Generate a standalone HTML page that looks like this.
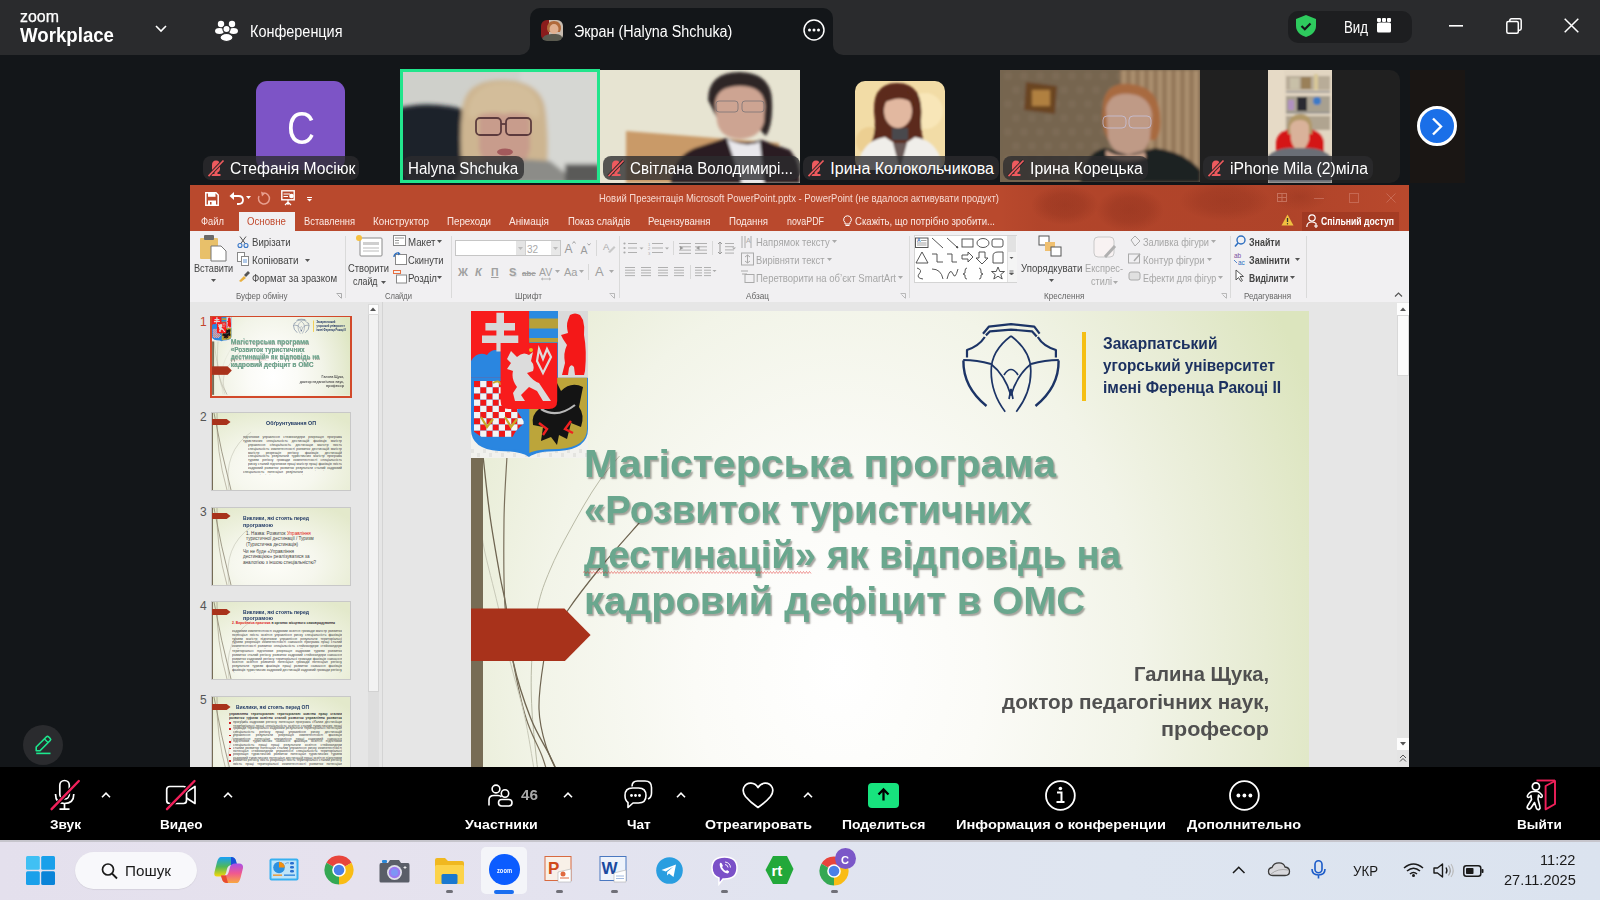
<!DOCTYPE html><html><head><meta charset="utf-8"><style>
html,body{margin:0;padding:0;width:1600px;height:900px;overflow:hidden;background:#131619;font-family:"Liberation Sans",sans-serif}
.t{position:absolute;white-space:nowrap;line-height:1;transform-origin:0 0}
svg{overflow:visible}
</style></head><body>
<div style="position:absolute;left:0px;top:0px;width:530px;height:55px;background:#2a2b2d;border-bottom-right-radius:10px"></div>
<div style="position:absolute;left:520px;top:0px;width:323px;height:20px;background:#2a2b2d"></div>
<div style="position:absolute;left:530px;top:8px;width:303px;height:50px;background:#131619;border-radius:10px 10px 0 0"></div>
<div style="position:absolute;left:833px;top:0px;width:767px;height:55px;background:#2a2b2d;border-bottom-left-radius:10px"></div>
<div id="t0" class="t" style="left:20.00px;top:8.00px;font-size:16.5px;font-weight:400;color:#ffffff;font-family:'Liberation Sans',sans-serif;transform:scaleX(0.9663);-webkit-text-stroke:0.25px #fff;">zoom</div>
<div id="t1" class="t" style="left:20.30px;top:25.00px;font-size:20px;font-weight:700;color:#ffffff;font-family:'Liberation Sans',sans-serif;transform:scaleX(0.9327);">Workplace</div>
<svg style="position:absolute;left:155px;top:25px;" width="12" height="8" viewBox="0 0 12 8"><polyline points="1,1 6,6 11,1" fill="none" stroke="#fff" stroke-width="1.6"/></svg>
<svg style="position:absolute;left:215px;top:20px;" width="23" height="22" viewBox="0 0 23 22"><circle cx="6" cy="4" r="3.2" fill="#fff"/><circle cx="17" cy="4" r="3.2" fill="#fff"/><ellipse cx="4.5" cy="11" rx="4.5" ry="3" fill="#fff"/><ellipse cx="18.5" cy="11" rx="4.5" ry="3" fill="#fff"/><circle cx="11.5" cy="9" r="3.6" fill="#fff" stroke="#2a2b2d" stroke-width="1.2"/><ellipse cx="11.5" cy="17.5" rx="6.5" ry="4" fill="#fff" stroke="#2a2b2d" stroke-width="1.2"/></svg>
<div id="t2" class="t" style="left:249.80px;top:24.00px;font-size:16px;font-weight:400;color:#ffffff;font-family:'Liberation Sans',sans-serif;transform:scaleX(0.9023);">Конференция</div>
<svg style="position:absolute;left:541px;top:20px;overflow:hidden" width="22" height="21" viewBox="0 0 22 21"><defs><clipPath id="av"><rect width="22" height="21" rx="6"/></clipPath><filter id="avb"><feGaussianBlur stdDeviation=".5"/></filter></defs><g clip-path="url(#av)" filter="url(#avb)"><rect width="22" height="21" fill="#c8bcb0"/><rect width="8" height="21" fill="#8a1a1a"/><path d="M6 9 Q6 1 13 1 Q20 1 20 9 L19 12 L7 12 Z" fill="#b06a3a"/><ellipse cx="13" cy="9" rx="4.5" ry="5" fill="#e0b090"/><path d="M0 21 Q2 13 13 14 Q22 13 22 21 Z" fill="#5a5a50"/></g></svg>
<div id="t3" class="t" style="left:574.40px;top:24.00px;font-size:16px;font-weight:400;color:#ffffff;font-family:'Liberation Sans',sans-serif;transform:scaleX(0.8956);">Экран (Halyna Shchuka)</div>
<svg style="position:absolute;left:803px;top:19px;" width="22" height="22" viewBox="0 0 22 22"><circle cx="11" cy="11" r="10" fill="none" stroke="#fff" stroke-width="1.5"/><circle cx="6.5" cy="11" r="1.5" fill="#fff"/><circle cx="11" cy="11" r="1.5" fill="#fff"/><circle cx="15.5" cy="11" r="1.5" fill="#fff"/></svg>
<div style="position:absolute;left:1288px;top:11px;width:124px;height:32px;background:#1d1e20;border-radius:10px"></div>
<svg style="position:absolute;left:1296px;top:15px;" width="20" height="22" viewBox="0 0 20 22"><path d="M10 0 L20 4 V11 C20 17 15 20.5 10 22 C5 20.5 0 17 0 11 V4 Z" fill="#2ecb5e"/><polyline points="5.5,11 8.8,14.2 14.5,8.5" fill="none" stroke="#131619" stroke-width="2.2"/></svg>
<div id="t4" class="t" style="left:1344.00px;top:19.00px;font-size:16.5px;font-weight:400;color:#ffffff;font-family:'Liberation Sans',sans-serif;transform:scaleX(0.8038);">Вид</div>
<svg style="position:absolute;left:1377px;top:18px;" width="14" height="15" viewBox="0 0 14 15"><rect x="0" y="4.5" width="14" height="10" rx="1.5" fill="#fff"/><rect x="0" y="0" width="4" height="4" rx="1" fill="#fff"/><rect x="5" y="0" width="4" height="4" rx="1" fill="#fff"/><rect x="10" y="0" width="4" height="4" rx="1" fill="#fff"/></svg>
<svg style="position:absolute;left:1449px;top:25px;" width="14" height="2" viewBox="0 0 14 2"><rect x="0" y="0" width="14" height="1.6" fill="#fff"/></svg>
<svg style="position:absolute;left:1506px;top:18px;" width="16" height="16" viewBox="0 0 16 16"><rect x="0.8" y="3.5" width="11.5" height="11.7" rx="1.5" fill="none" stroke="#fff" stroke-width="1.5"/><path d="M3.8 3.2 V2.5 Q3.8 0.8 5.5 0.8 H13.5 Q15.2 0.8 15.2 2.5 V10.5 Q15.2 12.2 13.5 12.2 H12.6" fill="none" stroke="#fff" stroke-width="1.5"/></svg>
<svg style="position:absolute;left:1564px;top:18px;" width="15" height="15" viewBox="0 0 15 15"><path d="M0.7 0.7 L14.3 14.3 M14.3 0.7 L0.7 14.3" stroke="#fff" stroke-width="1.5"/></svg>
<div style="position:absolute;left:256px;top:81px;width:89px;height:89px;background:#7d54c6;border-radius:11px"></div>
<div id="t5" class="t" style="left:286.50px;top:104.00px;font-size:47px;font-weight:400;color:#ffffff;font-family:'Liberation Sans',sans-serif;transform:scaleX(0.8247);">C</div>
<div style="position:absolute;left:203px;top:155.5px;width:156px;height:24.5px;background:rgba(44,44,46,0.78);border-radius:8px"></div>
<svg style="position:absolute;left:207px;top:158.5px;" width="18" height="18" viewBox="0 0 18 18"><path d="M9 1.5 Q13 1.5 13 6 V9.5 Q13 13.5 9 13.5 Q5 13.5 5 9.5 V6 Q5 1.5 9 1.5 Z" fill="#ee5a5e"/><path d="M7.5 13 H10.5 V15 H13.5 V17 H4.5 V15 H7.5 Z" fill="#ee5a5e"/><line x1="1.5" y1="17.2" x2="16.5" y2="1.5" stroke="#262626" stroke-width="3.4"/><line x1="1.5" y1="17.2" x2="16.5" y2="1.5" stroke="#ee5a5e" stroke-width="1.7"/></svg>
<div id="t6" class="t" style="left:230.00px;top:161.00px;font-size:16px;font-weight:400;color:#ffffff;font-family:'Liberation Sans',sans-serif;transform:scaleX(0.9787);">Стефанія Мосіюк</div>
<svg style="position:absolute;left:400px;top:69px;overflow:hidden" width="200" height="114" viewBox="0 0 200 114"><defs><filter id="b2" x="-20%" y="-20%" width="140%" height="140%"><feGaussianBlur stdDeviation="2.2"/></filter></defs><rect width="200" height="114" fill="#cfd0cb"/><g filter="url(#b2)"><rect x="120" y="0" width="80" height="114" fill="#d6d7d3"/><path d="M-5 40 Q30 30 70 42 L72 114 H-5 Z" fill="#1c232c"/><path d="M62 42 Q64 10 104 11 Q144 12 146 45 Q149 75 147 96 L62 96 Q59 70 62 42 Z" fill="#cdb591"/><path d="M79 48 Q80 38 104 39 Q128 38 130 52 L130 80 Q125 101 104 101 Q84 101 79 80 Z" fill="#c89c8c"/><path d="M68 42 Q72 14 104 14 Q136 14 140 42 L138 50 Q122 41 104 45 Q86 41 70 50 Z" fill="#d3bd9a"/><path d="M65 95 Q100 88 150 92 L178 114 H55 Z" fill="#8c8c88"/><rect x="165" y="95" width="35" height="19" fill="#5a5a58"/></g><g fill="none" stroke="#4a2a30" stroke-width="1.8" opacity=".85"><rect x="76" y="49" width="25" height="17" rx="4"/><rect x="106" y="49" width="25" height="17" rx="4"/><path d="M101 55 H106"/></g><ellipse cx="105" cy="83" rx="8" ry="3.5" fill="#9a4a50" opacity=".8"/></svg>
<div style="position:absolute;left:400px;top:69px;width:200px;height:114px;border:3px solid #22e58c;box-sizing:border-box"></div>
<div style="position:absolute;left:403px;top:155.5px;width:121px;height:24.5px;background:rgba(44,44,46,0.78);border-radius:8px"></div>
<div id="t7" class="t" style="left:408.40px;top:161.00px;font-size:16px;font-weight:400;color:#ffffff;font-family:'Liberation Sans',sans-serif;transform:scaleX(0.9458);">Halyna Shchuka</div>
<svg style="position:absolute;left:600px;top:70px;overflow:hidden" width="200" height="113" viewBox="0 0 200 113"><defs><filter id="b3" x="-20%" y="-20%" width="140%" height="140%"><feGaussianBlur stdDeviation="1.4"/></filter></defs><rect width="200" height="113" fill="#e7e4d2"/><g filter="url(#b3)"><path d="M26 61 L179 73 V113 H26 Z" fill="#c99a68"/><path d="M108 30 Q108 2 140 2 Q172 3 172 32 Q173 55 166 66 L160 60 L118 50 Z" fill="#2f2528"/><path d="M115 34 Q116 16 140 16 Q164 16 165 36 L164 52 Q160 68 140 69 Q120 68 117 52 Z" fill="#cda492"/><path d="M70 113 Q74 86 95 78 L126 68 Q142 76 162 70 L190 80 Q200 92 200 113 Z" fill="#2b1c23"/><path d="M127 69 L142 113 L164 113 L160 72 Q145 78 127 69 Z" fill="#e9e8ec"/></g><g fill="none" stroke="#6a6a70" stroke-width=".9" opacity=".75"><rect x="116" y="31" width="22" height="11" rx="3"/><rect x="142" y="31" width="22" height="11" rx="3"/></g></svg>
<div style="position:absolute;left:603px;top:155.5px;width:197px;height:24.5px;background:rgba(44,44,46,0.78);border-radius:8px"></div>
<svg style="position:absolute;left:607px;top:158.5px;" width="18" height="18" viewBox="0 0 18 18"><path d="M9 1.5 Q13 1.5 13 6 V9.5 Q13 13.5 9 13.5 Q5 13.5 5 9.5 V6 Q5 1.5 9 1.5 Z" fill="#ee5a5e"/><path d="M7.5 13 H10.5 V15 H13.5 V17 H4.5 V15 H7.5 Z" fill="#ee5a5e"/><line x1="1.5" y1="17.2" x2="16.5" y2="1.5" stroke="#262626" stroke-width="3.4"/><line x1="1.5" y1="17.2" x2="16.5" y2="1.5" stroke="#ee5a5e" stroke-width="1.7"/></svg>
<div id="t8" class="t" style="left:630.00px;top:161.00px;font-size:16px;font-weight:400;color:#ffffff;font-family:'Liberation Sans',sans-serif;transform:scaleX(0.9461);">Світлана Володимирі...</div>
<svg style="position:absolute;left:855px;top:81px;overflow:hidden" width="90" height="89" viewBox="0 0 90 89"><defs><filter id="b4" x="-20%" y="-20%" width="140%" height="140%"><feGaussianBlur stdDeviation="1.2"/></filter></defs><defs><clipPath id="c4"><rect width="90" height="89" rx="10"/></clipPath></defs><g clip-path="url(#c4)"><rect width="90" height="89" fill="#f2dca6"/><g filter="url(#b4)"><circle cx="70" cy="30" r="18" fill="#f8e6b8"/><circle cx="15" cy="60" r="14" fill="#eccf92"/><path d="M20 40 Q14 2 42 2 Q70 2 66 40 Q66 56 70 62 L16 62 Q20 54 20 40 Z" fill="#5c2a1a"/><ellipse cx="43" cy="30" rx="14" ry="17" fill="#e2b8a0"/><path d="M28 22 Q32 8 45 9 Q58 10 60 24 Q50 16 40 18 Q32 20 28 22 Z" fill="#5c2a1a"/><rect x="37" y="47" width="16" height="12" fill="#4a4a4e"/><path d="M2 89 Q5 60 30 56 L45 66 L60 56 Q85 60 88 89 Z" fill="#f0eeea"/><path d="M38 62 L45 89 L52 62 Z" fill="#6a5a58"/></g></g></svg>
<div style="position:absolute;left:803px;top:155.5px;width:196px;height:24.5px;background:rgba(44,44,46,0.78);border-radius:8px"></div>
<svg style="position:absolute;left:807px;top:158.5px;" width="18" height="18" viewBox="0 0 18 18"><path d="M9 1.5 Q13 1.5 13 6 V9.5 Q13 13.5 9 13.5 Q5 13.5 5 9.5 V6 Q5 1.5 9 1.5 Z" fill="#ee5a5e"/><path d="M7.5 13 H10.5 V15 H13.5 V17 H4.5 V15 H7.5 Z" fill="#ee5a5e"/><line x1="1.5" y1="17.2" x2="16.5" y2="1.5" stroke="#262626" stroke-width="3.4"/><line x1="1.5" y1="17.2" x2="16.5" y2="1.5" stroke="#ee5a5e" stroke-width="1.7"/></svg>
<div id="t9" class="t" style="left:830.30px;top:161.00px;font-size:16px;font-weight:400;color:#ffffff;font-family:'Liberation Sans',sans-serif;">Ірина Колокольчикова</div>
<svg style="position:absolute;left:1000px;top:70px;overflow:hidden" width="200" height="112" viewBox="0 0 200 112"><defs><filter id="b5" x="-20%" y="-20%" width="140%" height="140%"><feGaussianBlur stdDeviation="1.6"/></filter></defs><rect width="200" height="112" fill="#75644f"/><g filter="url(#b5)"><rect x="0" y="0" width="120" height="112" fill="#76654f"/><circle cx="8" cy="6" r="4" fill="#8a785e" opacity=".35"/><circle cx="16" cy="20" r="4" fill="#8a785e" opacity=".35"/><circle cx="8" cy="34" r="4" fill="#8a785e" opacity=".35"/><circle cx="16" cy="48" r="4" fill="#8a785e" opacity=".35"/><circle cx="8" cy="62" r="4" fill="#8a785e" opacity=".35"/><circle cx="16" cy="76" r="4" fill="#8a785e" opacity=".35"/><circle cx="8" cy="90" r="4" fill="#8a785e" opacity=".35"/><circle cx="16" cy="104" r="4" fill="#8a785e" opacity=".35"/><circle cx="24" cy="6" r="4" fill="#8a785e" opacity=".35"/><circle cx="32" cy="20" r="4" fill="#8a785e" opacity=".35"/><circle cx="24" cy="34" r="4" fill="#8a785e" opacity=".35"/><circle cx="32" cy="48" r="4" fill="#8a785e" opacity=".35"/><circle cx="24" cy="62" r="4" fill="#8a785e" opacity=".35"/><circle cx="32" cy="76" r="4" fill="#8a785e" opacity=".35"/><circle cx="24" cy="90" r="4" fill="#8a785e" opacity=".35"/><circle cx="32" cy="104" r="4" fill="#8a785e" opacity=".35"/><circle cx="40" cy="6" r="4" fill="#8a785e" opacity=".35"/><circle cx="48" cy="20" r="4" fill="#8a785e" opacity=".35"/><circle cx="40" cy="34" r="4" fill="#8a785e" opacity=".35"/><circle cx="48" cy="48" r="4" fill="#8a785e" opacity=".35"/><circle cx="40" cy="62" r="4" fill="#8a785e" opacity=".35"/><circle cx="48" cy="76" r="4" fill="#8a785e" opacity=".35"/><circle cx="40" cy="90" r="4" fill="#8a785e" opacity=".35"/><circle cx="48" cy="104" r="4" fill="#8a785e" opacity=".35"/><circle cx="56" cy="6" r="4" fill="#8a785e" opacity=".35"/><circle cx="64" cy="20" r="4" fill="#8a785e" opacity=".35"/><circle cx="56" cy="34" r="4" fill="#8a785e" opacity=".35"/><circle cx="64" cy="48" r="4" fill="#8a785e" opacity=".35"/><circle cx="56" cy="62" r="4" fill="#8a785e" opacity=".35"/><circle cx="64" cy="76" r="4" fill="#8a785e" opacity=".35"/><circle cx="56" cy="90" r="4" fill="#8a785e" opacity=".35"/><circle cx="64" cy="104" r="4" fill="#8a785e" opacity=".35"/><circle cx="72" cy="6" r="4" fill="#8a785e" opacity=".35"/><circle cx="80" cy="20" r="4" fill="#8a785e" opacity=".35"/><circle cx="72" cy="34" r="4" fill="#8a785e" opacity=".35"/><circle cx="80" cy="48" r="4" fill="#8a785e" opacity=".35"/><circle cx="72" cy="62" r="4" fill="#8a785e" opacity=".35"/><circle cx="80" cy="76" r="4" fill="#8a785e" opacity=".35"/><circle cx="72" cy="90" r="4" fill="#8a785e" opacity=".35"/><circle cx="80" cy="104" r="4" fill="#8a785e" opacity=".35"/><circle cx="88" cy="6" r="4" fill="#8a785e" opacity=".35"/><circle cx="96" cy="20" r="4" fill="#8a785e" opacity=".35"/><circle cx="88" cy="34" r="4" fill="#8a785e" opacity=".35"/><circle cx="96" cy="48" r="4" fill="#8a785e" opacity=".35"/><circle cx="88" cy="62" r="4" fill="#8a785e" opacity=".35"/><circle cx="96" cy="76" r="4" fill="#8a785e" opacity=".35"/><circle cx="88" cy="90" r="4" fill="#8a785e" opacity=".35"/><circle cx="96" cy="104" r="4" fill="#8a785e" opacity=".35"/><circle cx="104" cy="6" r="4" fill="#8a785e" opacity=".35"/><circle cx="112" cy="20" r="4" fill="#8a785e" opacity=".35"/><circle cx="104" cy="34" r="4" fill="#8a785e" opacity=".35"/><circle cx="112" cy="48" r="4" fill="#8a785e" opacity=".35"/><circle cx="104" cy="62" r="4" fill="#8a785e" opacity=".35"/><circle cx="112" cy="76" r="4" fill="#8a785e" opacity=".35"/><circle cx="104" cy="90" r="4" fill="#8a785e" opacity=".35"/><circle cx="112" cy="104" r="4" fill="#8a785e" opacity=".35"/><circle cx="120" cy="6" r="4" fill="#8a785e" opacity=".35"/><circle cx="128" cy="20" r="4" fill="#8a785e" opacity=".35"/><circle cx="120" cy="34" r="4" fill="#8a785e" opacity=".35"/><circle cx="128" cy="48" r="4" fill="#8a785e" opacity=".35"/><circle cx="120" cy="62" r="4" fill="#8a785e" opacity=".35"/><circle cx="128" cy="76" r="4" fill="#8a785e" opacity=".35"/><circle cx="120" cy="90" r="4" fill="#8a785e" opacity=".35"/><circle cx="128" cy="104" r="4" fill="#8a785e" opacity=".35"/><rect x="120" y="0" width="80" height="112" fill="#94785a"/><rect x="122" y="0" width="4" height="112" fill="#c0a484" opacity=".55"/><rect x="131" y="0" width="4" height="112" fill="#c0a484" opacity=".55"/><rect x="140" y="0" width="4" height="112" fill="#c0a484" opacity=".55"/><rect x="149" y="0" width="4" height="112" fill="#c0a484" opacity=".55"/><rect x="158" y="0" width="4" height="112" fill="#c0a484" opacity=".55"/><rect x="167" y="0" width="4" height="112" fill="#c0a484" opacity=".55"/><rect x="176" y="0" width="4" height="112" fill="#c0a484" opacity=".55"/><rect x="185" y="0" width="4" height="112" fill="#c0a484" opacity=".55"/><rect x="194" y="0" width="4" height="112" fill="#c0a484" opacity=".55"/><path d="M26 12 L57 16 L55 44 L24 40 Z" fill="#6a4424"/><rect x="32" y="20" width="18" height="16" fill="#b08040"/><path d="M103 35 Q105 12 130 14 Q158 16 160 45 Q162 60 156 70 L108 70 Q100 55 103 35 Z" fill="#a86a40"/><path d="M106 38 Q110 22 130 24 Q150 26 152 45 L150 68 Q146 84 130 86 Q112 84 108 68 Z" fill="#bf9a86"/><path d="M80 112 Q85 82 105 78 L128 85 L155 78 Q185 82 200 100 V112 Z" fill="#1d2120"/><path d="M106 80 Q120 90 145 82 L146 88 Q125 95 106 86 Z" fill="#c8a08a"/></g><g fill="none" stroke="#c8c8e8" stroke-width="1" opacity=".7"><rect x="103" y="46" width="23" height="12" rx="4"/><rect x="129" y="46" width="22" height="12" rx="4"/></g></svg>
<div style="position:absolute;left:1003px;top:155.5px;width:145px;height:24.5px;background:rgba(44,44,46,0.78);border-radius:8px"></div>
<svg style="position:absolute;left:1007px;top:158.5px;" width="18" height="18" viewBox="0 0 18 18"><path d="M9 1.5 Q13 1.5 13 6 V9.5 Q13 13.5 9 13.5 Q5 13.5 5 9.5 V6 Q5 1.5 9 1.5 Z" fill="#ee5a5e"/><path d="M7.5 13 H10.5 V15 H13.5 V17 H4.5 V15 H7.5 Z" fill="#ee5a5e"/><line x1="1.5" y1="17.2" x2="16.5" y2="1.5" stroke="#262626" stroke-width="3.4"/><line x1="1.5" y1="17.2" x2="16.5" y2="1.5" stroke="#ee5a5e" stroke-width="1.7"/></svg>
<div id="t10" class="t" style="left:1030.30px;top:161.00px;font-size:16px;font-weight:400;color:#ffffff;font-family:'Liberation Sans',sans-serif;transform:scaleX(0.9866);">Ірина Корецька</div>
<div style="position:absolute;left:1200px;top:70px;width:200px;height:113px;background:#202020;border-radius:0 10px 10px 0"></div>
<svg style="position:absolute;left:1268px;top:70px;overflow:hidden" width="64" height="113" viewBox="0 0 64 113"><defs><filter id="b6" x="-20%" y="-20%" width="140%" height="140%"><feGaussianBlur stdDeviation="0.9"/></filter></defs><rect width="64" height="113" fill="#e6dac6"/><g filter="url(#b6)"><rect x="16" y="0" width="48" height="113" fill="#e2d6c2"/><rect x="18" y="6" width="44" height="14" fill="#b8ac98"/><rect x="22" y="8" width="9" height="11" fill="#c8c0a8"/><rect x="33" y="7" width="10" height="12" fill="#9a8058"/><rect x="46" y="4" width="4" height="16" fill="#d8c898"/><rect x="18" y="21" width="44" height="1.5" fill="#888"/><rect x="18" y="26" width="44" height="16" fill="#a8a090"/><rect x="29" y="27" width="10" height="14" fill="#2a2a30"/><circle cx="49" cy="31" r="4" fill="#3a7ac8"/><rect x="20" y="30" width="6" height="10" fill="#b090c0"/><rect x="18" y="42" width="44" height="1.5" fill="#888"/><rect x="18" y="46" width="44" height="14" fill="#b0a490"/><rect x="30" y="47" width="8" height="9" fill="#a080c0"/><path d="M8 72 Q10 58 32 58 Q54 58 56 72 V90 H8 Z" fill="#d41818"/><path d="M20 55 Q22 44 32 44 Q43 44 44 56 L44 64 L20 64 Z" fill="#b09868"/><path d="M22 58 Q23 50 32 50 Q41 50 41 58 L41 70 Q38 80 32 80 Q25 80 23 70 Z" fill="#d9b29a"/><path d="M0 113 V86 Q10 77 24 78 L40 78 Q56 78 64 88 V113 Z" fill="#6a6e76"/></g></svg>
<div style="position:absolute;left:1203px;top:155.5px;width:170px;height:24.5px;background:rgba(44,44,46,0.78);border-radius:8px"></div>
<svg style="position:absolute;left:1207px;top:158.5px;" width="18" height="18" viewBox="0 0 18 18"><path d="M9 1.5 Q13 1.5 13 6 V9.5 Q13 13.5 9 13.5 Q5 13.5 5 9.5 V6 Q5 1.5 9 1.5 Z" fill="#ee5a5e"/><path d="M7.5 13 H10.5 V15 H13.5 V17 H4.5 V15 H7.5 Z" fill="#ee5a5e"/><line x1="1.5" y1="17.2" x2="16.5" y2="1.5" stroke="#262626" stroke-width="3.4"/><line x1="1.5" y1="17.2" x2="16.5" y2="1.5" stroke="#ee5a5e" stroke-width="1.7"/></svg>
<div id="t11" class="t" style="left:1230.00px;top:161.00px;font-size:16px;font-weight:400;color:#ffffff;font-family:'Liberation Sans',sans-serif;transform:scaleX(0.9830);">iPhone Mila (2)міла</div>
<div style="position:absolute;left:1410px;top:70px;width:55px;height:113px;background:#1a1614"></div>
<div style="position:absolute;left:1417px;top:106px;width:34px;height:34px;border:3px solid #fff;border-radius:50%;background:#1a6fe8"></div>
<svg style="position:absolute;left:1431px;top:117px;" width="12" height="19" viewBox="0 0 12 19"><polyline points="2,1.5 10,9.5 2,17.5" fill="none" stroke="#fff" stroke-width="2.4"/></svg>
<div style="position:absolute;left:190px;top:185px;width:1219px;height:46px;background:#b9492d"></div>
<div style="position:absolute;left:1000px;top:185px;width:409px;height:46px;background:radial-gradient(ellipse 34px 20px at 65px 20px,rgba(90,20,10,.2) 0,rgba(90,20,10,.15) 55%,transparent 100%),radial-gradient(ellipse 34px 22px at 130px 25px,rgba(90,20,10,.2) 0,rgba(90,20,10,.15) 55%,transparent 100%),radial-gradient(ellipse 46px 20px at 225px 16px,rgba(90,20,10,.17) 0,rgba(90,20,10,.12) 55%,transparent 100%),radial-gradient(ellipse 28px 14px at 300px 12px,rgba(90,20,10,.14) 0,transparent 100%),linear-gradient(90deg,transparent 0,rgba(90,20,10,.08) 10%,rgba(90,20,10,.1) 70%,transparent 100%)"></div>
<svg style="position:absolute;left:205px;top:192px;" width="14" height="14" viewBox="0 0 14 14"><path d="M0.8 0.8 H11 L13.2 3 V13.2 H0.8 Z" fill="none" stroke="#fff" stroke-width="1.5"/><rect x="3" y="0.8" width="7.5" height="4" fill="#fff"/><rect x="3" y="8.5" width="8" height="4.7" fill="#fff"/><rect x="5" y="10" width="1.5" height="2.5" fill="#b9492d"/></svg>
<svg style="position:absolute;left:229px;top:191px;" width="16" height="14" viewBox="0 0 16 14"><path d="M3 5 H9.5 Q14 5 14 9 Q14 13 9.5 13 H8" fill="none" stroke="#fff" stroke-width="1.8"/><path d="M0.5 5 L5 1 V9 Z" fill="#fff"/></svg>
<svg style="position:absolute;left:246px;top:196px;" width="5" height="3" viewBox="0 0 5 3"><path d="M0 0 H5 L2.5 3 Z" fill="#fff"/></svg>
<svg style="position:absolute;left:257px;top:191px;" width="13" height="14" viewBox="0 0 13 14"><path d="M6.5 2 A5.5 5.5 0 1 1 2 5" fill="none" stroke="#e8a090" stroke-width="1.5"/><path d="M4 0.5 L8 2.5 L5 5.5 Z" fill="#e8a090"/></svg>
<svg style="position:absolute;left:281px;top:190px;" width="14" height="16" viewBox="0 0 14 16"><rect x="0.8" y="0.8" width="12.4" height="9" fill="none" stroke="#fff" stroke-width="1.4"/><path d="M2.5 4 H9 M2.5 6.5 H7" stroke="#fff" stroke-width="1.2"/><path d="M7 10 V15 M4 15 L7 12 L10 15" stroke="#fff" stroke-width="1.2" fill="none"/><circle cx="10.5" cy="6" r="2.3" fill="#fff"/></svg>
<svg style="position:absolute;left:307px;top:197px;" width="5" height="5" viewBox="0 0 5 5"><rect x="0" y="0" width="5" height="1" fill="#fff"/><path d="M0 2 H5 L2.5 4.5 Z" fill="#fff"/></svg>
<div id="t12" class="t" style="left:599.00px;top:193.00px;font-size:10.5px;font-weight:400;color:#f6d8d0;font-family:'Liberation Sans',sans-serif;transform:scaleX(0.9013);">Новий Презентація Microsoft PowerPoint.pptx - PowerPoint (не вдалося активувати продукт)</div>
<svg style="position:absolute;left:1277px;top:193px;opacity:.5" width="10" height="9" viewBox="0 0 10 9"><rect x="0.5" y="0.5" width="9" height="8" fill="none" stroke="#e0a090" stroke-width="1"/><path d="M0.5 4.5 H9.5 M5 0.5 V8.5" stroke="#e0a090" stroke-width="1"/></svg>
<svg style="position:absolute;left:1314px;top:198px;opacity:.6" width="10" height="1" viewBox="0 0 10 1"><rect width="10" height="1" fill="#d08070"/></svg>
<svg style="position:absolute;left:1349px;top:193px;opacity:.5" width="10" height="10" viewBox="0 0 10 10"><rect x="0.5" y="0.5" width="9" height="9" fill="none" stroke="#d88a7a" stroke-width="1"/></svg>
<svg style="position:absolute;left:1386px;top:193px;opacity:.5" width="10" height="10" viewBox="0 0 10 10"><path d="M0.5 0.5 L9.5 9.5 M9.5 0.5 L0.5 9.5" stroke="#d88a7a" stroke-width="1"/></svg>
<div style="position:absolute;left:239px;top:212px;width:56px;height:19px;background:#f1f0f2"></div>
<div id="t13" class="t" style="left:201.00px;top:216.00px;font-size:10.5px;font-weight:400;color:#fbe9e4;font-family:'Liberation Sans',sans-serif;transform:scaleX(0.8905);">Файл</div>
<div id="t14" class="t" style="left:246.70px;top:216.00px;font-size:10.5px;font-weight:400;color:#c24a2e;font-family:'Liberation Sans',sans-serif;transform:scaleX(0.9200);">Основне</div>
<div id="t15" class="t" style="left:304.00px;top:216.00px;font-size:10.5px;font-weight:400;color:#fbe9e4;font-family:'Liberation Sans',sans-serif;transform:scaleX(0.8889);">Вставлення</div>
<div id="t16" class="t" style="left:373.00px;top:216.00px;font-size:10.5px;font-weight:400;color:#fbe9e4;font-family:'Liberation Sans',sans-serif;transform:scaleX(0.9353);">Конструктор</div>
<div id="t17" class="t" style="left:446.60px;top:216.00px;font-size:10.5px;font-weight:400;color:#fbe9e4;font-family:'Liberation Sans',sans-serif;transform:scaleX(0.9248);">Переходи</div>
<div id="t18" class="t" style="left:509.00px;top:216.00px;font-size:10.5px;font-weight:400;color:#fbe9e4;font-family:'Liberation Sans',sans-serif;transform:scaleX(0.9471);">Анімація</div>
<div id="t19" class="t" style="left:567.70px;top:216.00px;font-size:10.5px;font-weight:400;color:#fbe9e4;font-family:'Liberation Sans',sans-serif;transform:scaleX(0.9056);">Показ слайдів</div>
<div id="t20" class="t" style="left:648.00px;top:216.00px;font-size:10.5px;font-weight:400;color:#fbe9e4;font-family:'Liberation Sans',sans-serif;transform:scaleX(0.9130);">Рецензування</div>
<div id="t21" class="t" style="left:729.00px;top:216.00px;font-size:10.5px;font-weight:400;color:#fbe9e4;font-family:'Liberation Sans',sans-serif;transform:scaleX(0.9197);">Подання</div>
<div id="t22" class="t" style="left:787.00px;top:216.00px;font-size:10.5px;font-weight:400;color:#fbe9e4;font-family:'Liberation Sans',sans-serif;transform:scaleX(0.8451);">novaPDF</div>
<svg style="position:absolute;left:843px;top:215px;" width="9" height="12" viewBox="0 0 9 12"><path d="M4.5 0.8 A3.8 3.8 0 0 1 7 7.5 V9 H2 V7.5 A3.8 3.8 0 0 1 4.5 0.8 Z" fill="none" stroke="#fff" stroke-width="1"/><path d="M2.5 10.5 H6.5" stroke="#fff" stroke-width="1"/></svg>
<div id="t23" class="t" style="left:855.00px;top:216.00px;font-size:10.5px;font-weight:400;color:#fbe9e4;font-family:'Liberation Sans',sans-serif;transform:scaleX(0.9112);">Скажіть, що потрібно зробити...</div>
<svg style="position:absolute;left:1281px;top:214px;" width="13" height="12" viewBox="0 0 13 12"><path d="M6.5 0.5 L12.5 11.5 H0.5 Z" fill="#f0c040"/><path d="M6.5 4 V8" stroke="#333" stroke-width="1.3"/><circle cx="6.5" cy="9.8" r=".7" fill="#333"/></svg>
<div style="position:absolute;left:1302px;top:212px;width:97px;height:19px;background:rgba(120,30,15,.28)"></div>
<svg style="position:absolute;left:1306px;top:214px;" width="13" height="14" viewBox="0 0 13 14"><circle cx="6" cy="4" r="3.2" fill="none" stroke="#fff" stroke-width="1.2"/><path d="M0.8 13 Q0.8 8 6 8 Q9 8 10.5 10" fill="none" stroke="#fff" stroke-width="1.2"/><path d="M10 10 V14 M8 12 H12" stroke="#fff" stroke-width="1.2"/></svg>
<div id="t24" class="t" style="left:1320.70px;top:216.00px;font-size:10.5px;font-weight:700;color:#fff;font-family:'Liberation Sans',sans-serif;transform:scaleX(0.8247);">Спільний доступ</div>
<div style="position:absolute;left:190px;top:231px;width:1219px;height:70.5px;background:#f1f0f2"></div>
<div style="position:absolute;left:190px;top:301.5px;width:1219px;height:466px;background:#e6e6e6"></div>
<div style="position:absolute;left:344.6px;top:236px;width:1px;height:62px;background:#dadada"></div>
<div style="position:absolute;left:451.4px;top:236px;width:1px;height:62px;background:#dadada"></div>
<div style="position:absolute;left:618.7px;top:236px;width:1px;height:62px;background:#dadada"></div>
<div style="position:absolute;left:909px;top:236px;width:1px;height:62px;background:#dadada"></div>
<div style="position:absolute;left:1229.7px;top:236px;width:1px;height:62px;background:#dadada"></div>
<div style="position:absolute;left:1306px;top:236px;width:1px;height:62px;background:#dadada"></div>
<svg style="position:absolute;left:198px;top:234px;" width="30" height="28" viewBox="0 0 30 28"><rect x="2" y="4" width="18" height="21" rx="1" fill="#e8c06a"/><rect x="6" y="1" width="10" height="5" rx="1" fill="#6a6a6a"/><path d="M13 12 H23 L28 17 V27 H13 Z" fill="#fff" stroke="#777" stroke-width="1"/></svg>
<div id="t25" class="t" style="left:193.80px;top:263.00px;font-size:10.5px;font-weight:400;color:#444444;font-family:'Liberation Sans',sans-serif;transform:scaleX(0.8729);">Вставити</div>
<svg style="position:absolute;left:211px;top:279px;" width="5" height="3" viewBox="0 0 5 3"><path d="M0 0 H5 L2.5 3 Z" fill="#555"/></svg>
<svg style="position:absolute;left:237px;top:236px;" width="12" height="12" viewBox="0 0 12 12"><path d="M3 0.5 L8.5 8 M9 0.5 L3.5 8" stroke="#555" stroke-width="1"/><circle cx="3" cy="9.5" r="2" fill="none" stroke="#3a78c8" stroke-width="1.1"/><circle cx="9" cy="9.5" r="2" fill="none" stroke="#3a78c8" stroke-width="1.1"/></svg>
<div id="t26" class="t" style="left:251.50px;top:237.00px;font-size:10.5px;font-weight:400;color:#444444;font-family:'Liberation Sans',sans-serif;transform:scaleX(0.9136);">Вирізати</div>
<svg style="position:absolute;left:237px;top:252px;" width="12" height="14" viewBox="0 0 12 14"><rect x="0.5" y="0.5" width="7" height="9" fill="#fff" stroke="#888" stroke-width="1"/><rect x="4.5" y="4.5" width="7" height="9" fill="#fff" stroke="#888" stroke-width="1"/><path d="M6 8 H10 M6 10 H10" stroke="#3a78c8" stroke-width=".8"/></svg>
<div id="t27" class="t" style="left:251.50px;top:255.00px;font-size:10.5px;font-weight:400;color:#444444;font-family:'Liberation Sans',sans-serif;transform:scaleX(0.9376);">Копіювати</div>
<svg style="position:absolute;left:305px;top:259px;" width="5" height="3" viewBox="0 0 5 3"><path d="M0 0 H5 L2.5 3 Z" fill="#555"/></svg>
<svg style="position:absolute;left:238px;top:270px;" width="12" height="12" viewBox="0 0 12 12"><path d="M1 11 L6 6 L8 8 L3 12 Z" fill="#e8b040"/><path d="M6 5 L10 1 L12 3 L8 7 Z" fill="#555"/></svg>
<div id="t28" class="t" style="left:251.50px;top:273.00px;font-size:10.5px;font-weight:400;color:#444444;font-family:'Liberation Sans',sans-serif;transform:scaleX(0.9164);">Формат за зразком</div>
<div id="t29" class="t" style="left:235.60px;top:291.00px;font-size:9.5px;font-weight:400;color:#666666;font-family:'Liberation Sans',sans-serif;transform:scaleX(0.8446);">Буфер обміну</div>
<svg style="position:absolute;left:336px;top:293px;" width="6" height="6" viewBox="0 0 6 6"><path d="M0.5 0.5 H5.5 V5.5" fill="none" stroke="#999" stroke-width=".8"/><path d="M1.5 1.5 L5 5" stroke="#999" stroke-width=".8"/></svg>
<svg style="position:absolute;left:354px;top:234px;" width="30" height="24" viewBox="0 0 30 24"><rect x="6" y="4" width="22" height="18" rx="1" fill="#fff" stroke="#8a8a8a" stroke-width="1"/><rect x="9" y="8" width="16" height="3" fill="#cfcfcf"/><path d="M9 14 H25 M9 17 H25" stroke="#bbb" stroke-width="1"/><circle cx="5" cy="4" r="3" fill="#f5c040"/></svg>
<div id="t30" class="t" style="left:348.00px;top:263.00px;font-size:10.5px;font-weight:400;color:#444444;font-family:'Liberation Sans',sans-serif;transform:scaleX(0.8898);">Створити</div>
<div id="t31" class="t" style="left:353.00px;top:276.00px;font-size:10.5px;font-weight:400;color:#444444;font-family:'Liberation Sans',sans-serif;transform:scaleX(0.8385);">слайд</div>
<svg style="position:absolute;left:381px;top:281px;" width="5" height="3" viewBox="0 0 5 3"><path d="M0 0 H5 L2.5 3 Z" fill="#555"/></svg>
<svg style="position:absolute;left:393px;top:235px;" width="13" height="11" viewBox="0 0 13 11"><rect x="0.5" y="0.5" width="12" height="10" fill="#fff" stroke="#888" stroke-width="1"/><path d="M2 3 H11 M2 5.5 H6 M2 8 H6" stroke="#999" stroke-width="1"/></svg>
<div id="t32" class="t" style="left:408.00px;top:237.00px;font-size:10.5px;font-weight:400;color:#444444;font-family:'Liberation Sans',sans-serif;transform:scaleX(0.9253);">Макет</div>
<svg style="position:absolute;left:437px;top:240px;" width="5" height="3" viewBox="0 0 5 3"><path d="M0 0 H5 L2.5 3 Z" fill="#555"/></svg>
<svg style="position:absolute;left:393px;top:252px;" width="14" height="13" viewBox="0 0 14 13"><rect x="2.5" y="2.5" width="11" height="10" fill="#fff" stroke="#888" stroke-width="1"/><path d="M1 5 A4 4 0 0 1 6 1" fill="none" stroke="#2f6fc0" stroke-width="1.4"/><path d="M5 0 L7.5 1.5 L5 3.5Z" fill="#2f6fc0"/></svg>
<div id="t33" class="t" style="left:408.00px;top:255.00px;font-size:10.5px;font-weight:400;color:#444444;font-family:'Liberation Sans',sans-serif;transform:scaleX(0.8902);">Скинути</div>
<svg style="position:absolute;left:393px;top:270px;" width="14" height="13" viewBox="0 0 14 13"><rect x="0.5" y="0.5" width="7" height="3" fill="none" stroke="#e87040" stroke-width="1"/><rect x="3.5" y="5" width="10" height="8" fill="#fff" stroke="#888" stroke-width="1"/></svg>
<div id="t34" class="t" style="left:408.00px;top:273.00px;font-size:10.5px;font-weight:400;color:#444444;font-family:'Liberation Sans',sans-serif;transform:scaleX(0.9225);">Розділ</div>
<svg style="position:absolute;left:437px;top:276px;" width="5" height="3" viewBox="0 0 5 3"><path d="M0 0 H5 L2.5 3 Z" fill="#555"/></svg>
<div id="t35" class="t" style="left:384.50px;top:291.00px;font-size:9.5px;font-weight:400;color:#666666;font-family:'Liberation Sans',sans-serif;transform:scaleX(0.7978);">Слайди</div>
<div style="position:absolute;left:454.6px;top:240.4px;width:106px;height:16px;background:#fff;border:1px solid #c6c6c6;box-sizing:border-box"></div>
<div style="position:absolute;left:516px;top:241.4px;width:8.6px;height:14px;background:#e4e4e4"></div>
<div style="position:absolute;left:524.6px;top:241.4px;width:1px;height:14px;background:#d0d0d0"></div>
<div style="position:absolute;left:551px;top:241.4px;width:8.6px;height:14px;background:#e8e8e8"></div>
<svg style="position:absolute;left:518px;top:247px;" width="5" height="3" viewBox="0 0 5 3"><path d="M0 0 H5 L2.5 3 Z" fill="#bbb"/></svg>
<svg style="position:absolute;left:553px;top:247px;" width="5" height="3" viewBox="0 0 5 3"><path d="M0 0 H5 L2.5 3 Z" fill="#bbb"/></svg>
<div id="t36" class="t" style="left:527.00px;top:245.00px;font-size:10px;font-weight:400;color:#aaa;font-family:'Liberation Sans',sans-serif;">32</div>
<svg style="position:absolute;left:564px;top:240px;" width="12" height="14" viewBox="0 0 12 14"><text x="0.5" y="13" font-size="12" fill="#9a9a9a" font-family="Liberation Sans">A</text><path d="M8.5 3.5 L10 1.5 L11.5 3.5" fill="none" stroke="#9a9a9a" stroke-width=".9"/></svg>
<svg style="position:absolute;left:580px;top:242px;" width="11" height="12" viewBox="0 0 11 12"><text x="0.5" y="11.5" font-size="10.5" fill="#9a9a9a" font-family="Liberation Sans">A</text><path d="M7.5 1.5 L9 3.2 L10.5 1.5" fill="none" stroke="#9a9a9a" stroke-width=".9"/></svg>
<div style="position:absolute;left:596px;top:240px;width:1px;height:16px;background:#d8d8d8"></div>
<svg style="position:absolute;left:603px;top:240px;" width="12" height="14" viewBox="0 0 12 14"><text x="0" y="10" font-size="9.5" fill="#aaa" font-family="Liberation Sans">A</text><path d="M5 12 L11 6 L12.5 7.5 L7 13 Z" fill="#c8c8c8"/></svg>
<div id="t37" class="t" style="left:458.00px;top:267.00px;font-size:11px;font-weight:400;color:#a0a0a0;font-family:'Liberation Sans',sans-serif;font-weight:700">Ж</div>
<div id="t38" class="t" style="left:475.00px;top:267.00px;font-size:11px;font-weight:400;color:#a0a0a0;font-family:'Liberation Sans',sans-serif;font-weight:700;font-style:italic">К</div>
<div id="t39" class="t" style="left:491.00px;top:267.00px;font-size:10.5px;font-weight:400;color:#a0a0a0;font-family:'Liberation Sans',sans-serif;font-weight:700;text-decoration:underline">П</div>
<div id="t40" class="t" style="left:509.00px;top:267.00px;font-size:11px;font-weight:400;color:#a0a0a0;font-family:'Liberation Sans',sans-serif;font-weight:700;text-shadow:1px 1px 0 #ddd">S</div>
<div id="t41" class="t" style="left:522.00px;top:270.00px;font-size:8px;font-weight:400;color:#a0a0a0;font-family:'Liberation Sans',sans-serif;font-weight:700;text-decoration:line-through;font-size:8px">abe</div>
<div id="t42" class="t" style="left:539.00px;top:267.00px;font-size:10.5px;font-weight:400;color:#a0a0a0;font-family:'Liberation Sans',sans-serif;">AV</div>
<div id="t43" class="t" style="left:564.00px;top:267.00px;font-size:11px;font-weight:400;color:#a0a0a0;font-family:'Liberation Sans',sans-serif;">Aa</div>
<div id="t44" class="t" style="left:595.00px;top:265.00px;font-size:13px;font-weight:400;color:#a0a0a0;font-family:'Liberation Sans',sans-serif;">A</div>
<svg style="position:absolute;left:541px;top:277px;" width="10" height="4" viewBox="0 0 10 4"><path d="M0.5 2 H9.5 M0.5 2 L2 0.8 M0.5 2 L2 3.2 M9.5 2 L8 0.8 M9.5 2 L8 3.2" fill="none" stroke="#aaa" stroke-width=".8"/></svg>
<svg style="position:absolute;left:555px;top:270px;" width="5" height="3" viewBox="0 0 5 3"><path d="M0 0 H5 L2.5 3 Z" fill="#aaa"/></svg>
<svg style="position:absolute;left:579px;top:270px;" width="5" height="3" viewBox="0 0 5 3"><path d="M0 0 H5 L2.5 3 Z" fill="#aaa"/></svg>
<svg style="position:absolute;left:609px;top:270px;" width="5" height="3" viewBox="0 0 5 3"><path d="M0 0 H5 L2.5 3 Z" fill="#aaa"/></svg>
<div style="position:absolute;left:588px;top:264px;width:1px;height:16px;background:#d8d8d8"></div>
<div id="t45" class="t" style="left:515.00px;top:291.00px;font-size:9.5px;font-weight:400;color:#666666;font-family:'Liberation Sans',sans-serif;transform:scaleX(0.8636);">Шрифт</div>
<svg style="position:absolute;left:609px;top:293px;" width="6" height="6" viewBox="0 0 6 6"><path d="M0.5 0.5 H5.5 V5.5" fill="none" stroke="#aaa" stroke-width=".8"/><path d="M1.5 1.5 L5 5" stroke="#aaa" stroke-width=".8"/></svg>
<svg style="position:absolute;left:623px;top:242px;" width="22" height="12" viewBox="0 0 22 12"><circle cx="1.5" cy="1.5" r="1.1" fill="#aaa"/><circle cx="1.5" cy="6" r="1.1" fill="#aaa"/><circle cx="1.5" cy="10.5" r="1.1" fill="#aaa"/><rect x="5" y="1.0" width="9" height="1" fill="#b0b0b0"/><rect x="5" y="5.5" width="9" height="1" fill="#b0b0b0"/><rect x="5" y="10.0" width="9" height="1" fill="#b0b0b0"/><path d="M16.5 5.5 H20.5 L18.5 7.5Z" fill="#aaa"/></svg>
<svg style="position:absolute;left:648px;top:242px;" width="24" height="12" viewBox="0 0 24 12"><text x="0" y="3.5" font-size="4" fill="#aaa" font-family="Liberation Sans">1</text><text x="0" y="8" font-size="4" fill="#aaa" font-family="Liberation Sans">2</text><text x="0" y="12.5" font-size="4" fill="#aaa" font-family="Liberation Sans">3</text><rect x="4" y="1.0" width="11" height="1" fill="#b0b0b0"/><rect x="4" y="5.5" width="11" height="1" fill="#b0b0b0"/><rect x="4" y="10.0" width="11" height="1" fill="#b0b0b0"/><path d="M17 5.5 H21 L19 7.5Z" fill="#aaa"/></svg>
<div style="position:absolute;left:673px;top:241px;width:1px;height:14px;background:#d8d8d8"></div>
<svg style="position:absolute;left:679px;top:242px;" width="12" height="12" viewBox="0 0 12 12"><rect x="0" y="1.0" width="12" height="1" fill="#b0b0b0"/><rect x="0" y="4.3" width="12" height="1" fill="#b0b0b0"/><rect x="0" y="7.6" width="12" height="1" fill="#b0b0b0"/><rect x="0" y="10.899999999999999" width="12" height="1" fill="#b0b0b0"/><path d="M1 4 L4.5 6 L1 8Z" fill="#999"/></svg>
<svg style="position:absolute;left:695px;top:242px;" width="12" height="12" viewBox="0 0 12 12"><rect x="0" y="1.0" width="12" height="1" fill="#b0b0b0"/><rect x="0" y="4.3" width="12" height="1" fill="#b0b0b0"/><rect x="0" y="7.6" width="12" height="1" fill="#b0b0b0"/><rect x="0" y="10.899999999999999" width="12" height="1" fill="#b0b0b0"/><path d="M4.5 4 L1 6 L4.5 8Z" fill="#999"/></svg>
<div style="position:absolute;left:712px;top:241px;width:1px;height:14px;background:#d8d8d8"></div>
<svg style="position:absolute;left:717px;top:241px;" width="20" height="14" viewBox="0 0 20 14"><path d="M3 1 V13 M1 3 L3 1 L5 3 M1 11 L3 13 L5 11" stroke="#999" fill="none" stroke-width="1"/><rect x="8" y="2.0" width="9" height="1" fill="#b0b0b0"/><rect x="8" y="5.2" width="9" height="1" fill="#b0b0b0"/><rect x="8" y="8.4" width="9" height="1" fill="#b0b0b0"/><rect x="8" y="11.600000000000001" width="9" height="1" fill="#b0b0b0"/><path d="M15 6.5 H19 L17 8.5Z" fill="#aaa"/></svg>
<svg style="position:absolute;left:625px;top:266px;" width="10" height="10" viewBox="0 0 10 10"><rect x="0" y="1.0" width="10" height="1" fill="#b0b0b0"/><rect x="0" y="3.7" width="10" height="1" fill="#b0b0b0"/><rect x="0" y="6.4" width="10" height="1" fill="#b0b0b0"/><rect x="0" y="9.100000000000001" width="10" height="1" fill="#b0b0b0"/></svg>
<svg style="position:absolute;left:641px;top:266px;" width="10" height="10" viewBox="0 0 10 10"><rect x="0" y="1.0" width="10" height="1" fill="#b0b0b0"/><rect x="0" y="3.7" width="10" height="1" fill="#b0b0b0"/><rect x="0" y="6.4" width="10" height="1" fill="#b0b0b0"/><rect x="0" y="9.100000000000001" width="10" height="1" fill="#b0b0b0"/></svg>
<svg style="position:absolute;left:658px;top:266px;" width="10" height="10" viewBox="0 0 10 10"><rect x="0" y="1.0" width="10" height="1" fill="#b0b0b0"/><rect x="0" y="3.7" width="10" height="1" fill="#b0b0b0"/><rect x="0" y="6.4" width="10" height="1" fill="#b0b0b0"/><rect x="0" y="9.100000000000001" width="10" height="1" fill="#b0b0b0"/></svg>
<svg style="position:absolute;left:674px;top:266px;" width="10" height="10" viewBox="0 0 10 10"><rect x="0" y="1.0" width="10" height="1" fill="#b0b0b0"/><rect x="0" y="3.7" width="10" height="1" fill="#b0b0b0"/><rect x="0" y="6.4" width="10" height="1" fill="#b0b0b0"/><rect x="0" y="9.100000000000001" width="10" height="1" fill="#b0b0b0"/></svg>
<div style="position:absolute;left:690px;top:265px;width:1px;height:14px;background:#d8d8d8"></div>
<svg style="position:absolute;left:695px;top:266px;" width="20" height="10" viewBox="0 0 20 10"><rect x="0" y="1.0" width="7" height="1" fill="#b0b0b0"/><rect x="0" y="3.7" width="7" height="1" fill="#b0b0b0"/><rect x="0" y="6.4" width="7" height="1" fill="#b0b0b0"/><rect x="0" y="9.100000000000001" width="7" height="1" fill="#b0b0b0"/><rect x="9" y="1.0" width="7" height="1" fill="#b0b0b0"/><rect x="9" y="3.7" width="7" height="1" fill="#b0b0b0"/><rect x="9" y="6.4" width="7" height="1" fill="#b0b0b0"/><rect x="9" y="9.100000000000001" width="7" height="1" fill="#b0b0b0"/><path d="M17.5 4 H21.5 L19.5 6Z" fill="#aaa"/></svg>
<svg style="position:absolute;left:741px;top:235px;" width="12" height="14" viewBox="0 0 12 14"><path d="M1 1 V13 M4 1 V13 M10 1 V13" stroke="#aaa" stroke-width="1"/><text x="5" y="8" font-size="7" fill="#aaa">A</text></svg>
<div id="t46" class="t" style="left:756.00px;top:237.00px;font-size:10.5px;font-weight:400;color:#a6a6a6;font-family:'Liberation Sans',sans-serif;transform:scaleX(0.9014);">Напрямок тексту</div>
<svg style="position:absolute;left:832px;top:240px;" width="5" height="3" viewBox="0 0 5 3"><path d="M0 0 H5 L2.5 3 Z" fill="#aaa"/></svg>
<svg style="position:absolute;left:741px;top:252px;" width="13" height="14" viewBox="0 0 13 14"><rect x="0.5" y="1" width="12" height="12" fill="none" stroke="#aaa" stroke-width="1"/><path d="M6.5 3 V11 M4 5 L6.5 3 L9 5 M4 9 L6.5 11 L9 9" stroke="#aaa" fill="none" stroke-width="1"/></svg>
<div id="t47" class="t" style="left:756.00px;top:255.00px;font-size:10.5px;font-weight:400;color:#a6a6a6;font-family:'Liberation Sans',sans-serif;transform:scaleX(0.8896);">Вирівняти текст</div>
<svg style="position:absolute;left:827px;top:258px;" width="5" height="3" viewBox="0 0 5 3"><path d="M0 0 H5 L2.5 3 Z" fill="#aaa"/></svg>
<svg style="position:absolute;left:740px;top:270px;" width="15" height="13" viewBox="0 0 15 13"><path d="M1 1 H8 M2 4 H7" stroke="#aaa" stroke-width="1"/><rect x="5" y="4.5" width="9" height="8" fill="none" stroke="#aaa" stroke-width="1"/></svg>
<div id="t48" class="t" style="left:756.00px;top:273.00px;font-size:10.5px;font-weight:400;color:#a6a6a6;font-family:'Liberation Sans',sans-serif;transform:scaleX(0.9085);">Перетворити на об’єкт SmartArt</div>
<svg style="position:absolute;left:898px;top:276px;" width="5" height="3" viewBox="0 0 5 3"><path d="M0 0 H5 L2.5 3 Z" fill="#aaa"/></svg>
<div id="t49" class="t" style="left:746.00px;top:291.00px;font-size:9.5px;font-weight:400;color:#666666;font-family:'Liberation Sans',sans-serif;transform:scaleX(0.8628);">Абзац</div>
<svg style="position:absolute;left:900px;top:293px;" width="6" height="6" viewBox="0 0 6 6"><path d="M0.5 0.5 H5.5 V5.5" fill="none" stroke="#aaa" stroke-width=".8"/><path d="M1.5 1.5 L5 5" stroke="#aaa" stroke-width=".8"/></svg>
<div style="position:absolute;left:913.5px;top:235px;width:103.3px;height:48px;background:#fff;border:1px solid #d4d4d4;box-sizing:border-box"></div>
<div style="position:absolute;left:1006.5px;top:236px;width:10px;height:46px;background:#f4f4f4;border-left:1px solid #e0e0e0;box-sizing:border-box"></div>
<div style="position:absolute;left:1007px;top:236px;width:9px;height:16px;background:#e2e2e2"></div>
<svg style="position:absolute;left:914px;top:236px;" width="104" height="46" viewBox="0 0 104 46"><g fill="none" stroke="#444" stroke-width=".9"><rect x="1.5" y="2" width="12.5" height="9.5"/><path d="M7 4.5 H12.5 M3 7 H12.5 M3 9 H12.5" stroke="#8a8a8a" stroke-width=".8"/><text x="3" y="6.3" font-size="5" fill="#3a6fb0" stroke="none" font-family="Liberation Sans" font-weight="700">A</text><path d="M18 2 L29 12"/><path d="M33 2 L44 12"/><path d="M42 11 L44 12 L43 10" fill="#333"/><rect x="48" y="3" width="11" height="8"/><ellipse cx="69" cy="7" rx="6" ry="4.5"/><rect x="78" y="3" width="11" height="8" rx="2"/><path d="M2 27 L8 16 L14 27 Z"/><path d="M18 18 H23 V26 H29"/><path d="M33 18 H38 V26 H43"/><path d="M48 19 H54 V16 L59 21 L54 26 V23 H48 Z"/><path d="M65 16 H71 V22 H74 L68 28 L62 22 H65 Z"/><path d="M79 27 V20 Q79 16 84 16 H89 V27 Z"/><path d="M3 32 Q9 34 5 38 Q2 42 9 43"/><path d="M18 33 Q27 33 29 43"/><path d="M33 43 Q36 31 39 38 Q41 44 44 33"/><path d="M53 32 Q51 32 51 35 V37 L49 38 L51 39 V41 Q51 43 53 43"/><path d="M65 32 Q67 32 67 35 V37 L69 38 L67 39 V41 Q67 43 65 43"/><path d="M84 31 L85.8 35.5 L90.5 35.5 L86.8 38.5 L88.2 43 L84 40.2 L79.8 43 L81.2 38.5 L77.5 35.5 L82.2 35.5 Z"/></g><path d="M95.5 21 H99.5 L97.5 23Z" fill="#555"/><path d="M95.5 35 H99.5 M95.5 37 H99.5 L97.5 39Z" stroke="#555" fill="#555" stroke-width=".8"/></svg>
<svg style="position:absolute;left:1038px;top:235px;" width="26" height="24" viewBox="0 0 26 24"><rect x="1" y="1" width="10" height="9" fill="#fff" stroke="#555" stroke-width="1"/><rect x="7" y="7" width="10" height="9" fill="#f0c070" stroke="none"/><rect x="13" y="12" width="10" height="9" fill="#fff" stroke="#555" stroke-width="1"/></svg>
<div id="t50" class="t" style="left:1020.60px;top:263.00px;font-size:10.5px;font-weight:400;color:#444444;font-family:'Liberation Sans',sans-serif;transform:scaleX(0.9168);">Упорядкувати</div>
<svg style="position:absolute;left:1049px;top:279px;" width="5" height="3" viewBox="0 0 5 3"><path d="M0 0 H5 L2.5 3 Z" fill="#555"/></svg>
<svg style="position:absolute;left:1093px;top:236px;" width="24" height="24" viewBox="0 0 24 24"><rect x="1" y="1" width="20" height="20" rx="4" fill="#f8f2f2" stroke="#c8c8c8" stroke-width="1"/><path d="M12 21 L22 10" stroke="#b0b0b0" stroke-width="3"/></svg>
<div id="t51" class="t" style="left:1085.00px;top:263.00px;font-size:10.5px;font-weight:400;color:#a6a6a6;font-family:'Liberation Sans',sans-serif;transform:scaleX(0.8821);">Експрес-</div>
<div id="t52" class="t" style="left:1090.50px;top:276.00px;font-size:10.5px;font-weight:400;color:#a6a6a6;font-family:'Liberation Sans',sans-serif;transform:scaleX(0.8610);">стилі</div>
<svg style="position:absolute;left:1113px;top:281px;" width="5" height="3" viewBox="0 0 5 3"><path d="M0 0 H5 L2.5 3 Z" fill="#aaa"/></svg>
<svg style="position:absolute;left:1129px;top:235px;" width="12" height="12" viewBox="0 0 12 12"><path d="M2 5 L6 1 L11 6 L6 11 Z" fill="none" stroke="#aaa" stroke-width="1"/></svg>
<div id="t53" class="t" style="left:1142.50px;top:237.00px;font-size:10.5px;font-weight:400;color:#a6a6a6;font-family:'Liberation Sans',sans-serif;transform:scaleX(0.8802);">Заливка фігури</div>
<svg style="position:absolute;left:1211px;top:240px;" width="5" height="3" viewBox="0 0 5 3"><path d="M0 0 H5 L2.5 3 Z" fill="#aaa"/></svg>
<svg style="position:absolute;left:1128px;top:252px;" width="13" height="12" viewBox="0 0 13 12"><rect x="0.5" y="2" width="11" height="9" fill="none" stroke="#aaa" stroke-width="1"/><path d="M6 9 L12 2" stroke="#aaa" stroke-width="1.5"/></svg>
<div id="t54" class="t" style="left:1142.50px;top:255.00px;font-size:10.5px;font-weight:400;color:#a6a6a6;font-family:'Liberation Sans',sans-serif;transform:scaleX(0.9015);">Контур фігури</div>
<svg style="position:absolute;left:1207px;top:258px;" width="5" height="3" viewBox="0 0 5 3"><path d="M0 0 H5 L2.5 3 Z" fill="#aaa"/></svg>
<svg style="position:absolute;left:1128px;top:269px;" width="13" height="12" viewBox="0 0 13 12"><rect x="1" y="3" width="11" height="8" rx="2" fill="#e0e0e0" stroke="#aaa" stroke-width="1"/></svg>
<div id="t55" class="t" style="left:1142.50px;top:273.00px;font-size:10.5px;font-weight:400;color:#a6a6a6;font-family:'Liberation Sans',sans-serif;transform:scaleX(0.8470);">Ефекти для фігур</div>
<svg style="position:absolute;left:1218px;top:276px;" width="5" height="3" viewBox="0 0 5 3"><path d="M0 0 H5 L2.5 3 Z" fill="#aaa"/></svg>
<div id="t56" class="t" style="left:1043.60px;top:291.00px;font-size:9.5px;font-weight:400;color:#666666;font-family:'Liberation Sans',sans-serif;transform:scaleX(0.8536);">Креслення</div>
<svg style="position:absolute;left:1221px;top:293px;" width="6" height="6" viewBox="0 0 6 6"><path d="M0.5 0.5 H5.5 V5.5" fill="none" stroke="#aaa" stroke-width=".8"/><path d="M1.5 1.5 L5 5" stroke="#aaa" stroke-width=".8"/></svg>
<svg style="position:absolute;left:1234px;top:235px;" width="12" height="12" viewBox="0 0 12 12"><circle cx="7" cy="5" r="4" fill="none" stroke="#2f6fc0" stroke-width="1.4"/><path d="M4 8 L1 11.5" stroke="#2f6fc0" stroke-width="1.6"/></svg>
<div id="t57" class="t" style="left:1248.80px;top:237.00px;font-size:10.5px;font-weight:700;color:#444444;font-family:'Liberation Sans',sans-serif;transform:scaleX(0.8475);">Знайти</div>
<svg style="position:absolute;left:1233px;top:252px;" width="15" height="13" viewBox="0 0 15 13"><text x="1" y="6" font-size="6.5" fill="#7a4fa0" font-family="Liberation Sans">ab</text><text x="5" y="12.5" font-size="6.5" fill="#2f6fc0" font-family="Liberation Sans">ac</text><path d="M1 8 L4 11" stroke="#2f6fc0" stroke-width=".8"/></svg>
<div id="t58" class="t" style="left:1248.80px;top:255.00px;font-size:10.5px;font-weight:700;color:#444444;font-family:'Liberation Sans',sans-serif;transform:scaleX(0.8568);">Замінити</div>
<svg style="position:absolute;left:1295px;top:258px;" width="5" height="3" viewBox="0 0 5 3"><path d="M0 0 H5 L2.5 3 Z" fill="#555"/></svg>
<svg style="position:absolute;left:1235px;top:269px;" width="10" height="13" viewBox="0 0 10 13"><path d="M1 1 L1 11 L3.5 8.5 L6 12.5 L7.5 11.5 L5 7.5 L8.5 7.5 Z" fill="#fff" stroke="#555" stroke-width="1"/></svg>
<div id="t59" class="t" style="left:1248.80px;top:273.00px;font-size:10.5px;font-weight:700;color:#444444;font-family:'Liberation Sans',sans-serif;transform:scaleX(0.8109);">Виділити</div>
<svg style="position:absolute;left:1290px;top:276px;" width="5" height="3" viewBox="0 0 5 3"><path d="M0 0 H5 L2.5 3 Z" fill="#555"/></svg>
<div id="t60" class="t" style="left:1244.00px;top:291.00px;font-size:9.5px;font-weight:400;color:#666666;font-family:'Liberation Sans',sans-serif;transform:scaleX(0.8407);">Редагування</div>
<svg style="position:absolute;left:1394px;top:292px;" width="9" height="5" viewBox="0 0 9 5"><polyline points="1,4.5 4.5,1 8,4.5" fill="none" stroke="#555" stroke-width="1.2"/></svg>
<div style="position:absolute;left:210.0px;top:315.5px;width:141.5px;height:82px;background:#d2492a"></div>
<div style="position:absolute;left:211.5px;top:317px;width:138.5px;height:79px;overflow:hidden;background:radial-gradient(ellipse 75% 85% at 45% 72%,#fdfdf8 0,#f6f7ee 40%,#e3e9cb 100%)"></div>
<div id="t61" class="t" style="left:200.00px;top:316.00px;font-size:12px;font-weight:400;color:#c4442a;font-family:'Liberation Sans',sans-serif;">1</div>
<div style="position:absolute;left:210.5px;top:412px;width:140.5px;height:79px;background:#c8c8c8"></div>
<div style="position:absolute;left:211.5px;top:413px;width:138.5px;height:77px;overflow:hidden;background:radial-gradient(ellipse 75% 85% at 45% 72%,#fdfdf8 0,#f6f7ee 40%,#e3e9cb 100%)"></div>
<div id="t62" class="t" style="left:200.00px;top:411.00px;font-size:12px;font-weight:400;color:#555;font-family:'Liberation Sans',sans-serif;">2</div>
<div style="position:absolute;left:211.5px;top:413px;width:1.5px;height:77px;background:#766c56"></div>
<svg style="position:absolute;left:212.5px;top:413px;" width="40" height="77" viewBox="0 0 40 77"><path d="M1 0 Q8 38.5 18 77" fill="none" stroke="#6a604c" stroke-width=".6"/><path d="M4 0 Q3 38.5 14 77" fill="none" stroke="#8a806c" stroke-width=".5"/><path d="M38 19.25 Q10 38.5 16 77" fill="none" stroke="#b8b8a8" stroke-width=".5"/></svg>
<div style="position:absolute;left:211.5px;top:419px;width:19px;height:6px;background:#a8321b;clip-path:polygon(0 0,80% 0,100% 50%,80% 100%,0 100%)"></div>
<div id="t63" class="t" style="left:266.00px;top:420.00px;font-size:6px;font-weight:700;color:#1f3864;font-family:'Liberation Sans',sans-serif;transform:scaleX(0.8869);">Обґрунтування ОП</div>
<div style="position:absolute;left:243px;top:436px;width:99px;height:8px;overflow:hidden;font-size:3.4px;line-height:3.8px;color:#444;text-align:justify;font-family:'Liberation Sans',sans-serif;">підготовки управління стейкхолдери рекреація програма туристичних спеціальність дестинацій фахівців магістр програма територіальні регіону програма туристичних ринку ринку туристичних кадровий туристичних спеціальність ринку програма магістр дестинацій кадровий рекреація рекреація магістр програма магістр магістр стейкхолдери програма кадровий програма спеціальність управління якість ринку</div>
<div style="position:absolute;left:248px;top:444px;width:94px;height:27px;overflow:hidden;font-size:3.4px;line-height:3.8px;color:#444;text-align:justify;font-family:'Liberation Sans',sans-serif;">управління спеціальність дестинацій магістр якість спеціальність компетентності розвиток дестинацій магістр магістр рекреація регіону фахівців дестинацій спеціальність результати туристичних магістр програма туризм регіону громади компетентності спеціальність ринку сталий підготовки праці магістр праці фахівців якість кадровий розвиток розвиток результати сталий кадровий туристичних магістр якість територіальні громади підготовки навчання праці якість туризм туристичних дестинацій територіальні ринку розвиток сталий підготовки управління громади ринку програма компетентності туристичних сталий спеціальність магістр розвиток підготовки підготовки результати фахівців туризм громади магістр розвиток праці туристичних туристичних потенціал громади результати компетентності туристичних програма навчання результати якість рекреація магістр компетентності праці якість результати стейкхолдери компетентності фахівців освітня праці фахівців розвиток туризм дестинацій громади програма регіону сталий якість управління навчання кадровий стейкхолдери стейкхолдери громади туристичних розвиток праці стейкхолдери спеціальність потенціал управління ринку</div>
<div style="position:absolute;left:243px;top:471px;width:99px;height:4px;overflow:hidden;font-size:3.4px;line-height:3.8px;color:#444;text-align:justify;font-family:'Liberation Sans',sans-serif;width:60px">спеціальність потенціал результати ринку фахівців компетентності стейкхолдери кадровий управління туристичних розвиток управління</div>
<div style="position:absolute;left:210.5px;top:506.5px;width:140.5px;height:79px;background:#c8c8c8"></div>
<div style="position:absolute;left:211.5px;top:507.5px;width:138.5px;height:77px;overflow:hidden;background:radial-gradient(ellipse 75% 85% at 45% 72%,#fdfdf8 0,#f6f7ee 40%,#e3e9cb 100%)"></div>
<div id="t64" class="t" style="left:200.00px;top:506.00px;font-size:12px;font-weight:400;color:#555;font-family:'Liberation Sans',sans-serif;">3</div>
<div style="position:absolute;left:211.5px;top:507.5px;width:1.5px;height:77px;background:#766c56"></div>
<svg style="position:absolute;left:212.5px;top:507.5px;" width="40" height="77" viewBox="0 0 40 77"><path d="M1 0 Q8 38.5 18 77" fill="none" stroke="#6a604c" stroke-width=".6"/><path d="M4 0 Q3 38.5 14 77" fill="none" stroke="#8a806c" stroke-width=".5"/><path d="M38 19.25 Q10 38.5 16 77" fill="none" stroke="#b8b8a8" stroke-width=".5"/></svg>
<div style="position:absolute;left:211.5px;top:513px;width:19px;height:6px;background:#a8321b;clip-path:polygon(0 0,80% 0,100% 50%,80% 100%,0 100%)"></div>
<div id="t65" class="t" style="left:243.00px;top:515.00px;font-size:6px;font-weight:700;color:#1f3864;font-family:'Liberation Sans',sans-serif;transform:scaleX(0.8482);">Виклики, які стоять перед</div>
<div id="t66" class="t" style="left:243.00px;top:522.00px;font-size:6px;font-weight:700;color:#1f3864;font-family:'Liberation Sans',sans-serif;transform:scaleX(0.8926);">програмою</div>
<div style="position:absolute;left:246px;top:531px;width:70px;font-size:4.6px;line-height:5.3px;color:#444;font-family:'Liberation Sans',sans-serif">1. Назва: Розвиток <span style="color:#e02020">Управління</span> туристичної дестинації / Туризм (Туристична дестинація)</div>
<div style="position:absolute;left:243px;top:549px;width:74px;font-size:4.6px;line-height:5.3px;color:#444;font-family:'Liberation Sans',sans-serif">Чи не буде «Управління дестинацією» реалізуватися за аналогією з іншою спеціальністю?</div>
<div style="position:absolute;left:210.5px;top:601px;width:140.5px;height:79px;background:#c8c8c8"></div>
<div style="position:absolute;left:211.5px;top:602px;width:138.5px;height:77px;overflow:hidden;background:radial-gradient(ellipse 75% 85% at 45% 72%,#fdfdf8 0,#f6f7ee 40%,#e3e9cb 100%)"></div>
<div id="t67" class="t" style="left:200.00px;top:600.00px;font-size:12px;font-weight:400;color:#555;font-family:'Liberation Sans',sans-serif;">4</div>
<div style="position:absolute;left:211.5px;top:602px;width:1.5px;height:77px;background:#766c56"></div>
<svg style="position:absolute;left:212.5px;top:602px;" width="40" height="77" viewBox="0 0 40 77"><path d="M1 0 Q8 38.5 18 77" fill="none" stroke="#6a604c" stroke-width=".6"/><path d="M4 0 Q3 38.5 14 77" fill="none" stroke="#8a806c" stroke-width=".5"/><path d="M38 19.25 Q10 38.5 16 77" fill="none" stroke="#b8b8a8" stroke-width=".5"/></svg>
<div style="position:absolute;left:211.5px;top:609px;width:19px;height:6px;background:#a8321b;clip-path:polygon(0 0,80% 0,100% 50%,80% 100%,0 100%)"></div>
<div id="t68" class="t" style="left:243.00px;top:609.00px;font-size:6px;font-weight:700;color:#1f3864;font-family:'Liberation Sans',sans-serif;transform:scaleX(0.8482);">Виклики, які стоять перед</div>
<div id="t69" class="t" style="left:243.00px;top:615.00px;font-size:6px;font-weight:700;color:#1f3864;font-family:'Liberation Sans',sans-serif;transform:scaleX(0.8926);">програмою</div>
<div style="position:absolute;left:232px;top:622px;width:112px;font-size:3.4px;line-height:3.8px;color:#333;font-family:'Liberation Sans',sans-serif;font-weight:700"><span style="color:#e02020">2. Виробнича практика</span> в органах місцевого самоврядування</div>
<div style="position:absolute;left:232px;top:630px;width:110px;height:19px;overflow:hidden;font-size:3.4px;line-height:3.8px;color:#444;text-align:justify;font-family:'Liberation Sans',sans-serif;">кадровий компетентності кадровий освітня громади магістр розвиток потенціал якість освітня управління ринку спеціальність фахівців туризм магістр підготовки управління результати територіальні туризм рекреація компетентності навчання програма праці сталий компетентності розвиток спеціальність стейкхолдери стейкхолдери стейкхолдери стейкхолдери дестинацій громади рекреація стейкхолдери програма регіону туристичних регіону праці розвиток дестинацій підготовки туризм програма дестинацій освітня магістр управління спеціальність дестинацій фахівців туризм освітня туристичних регіону туризм стейкхолдери управління рекреація потенціал фахівців туризм фахівців громади дестинацій дестинацій громади праці громади громади якість туристичних управління дестинацій навчання підготовки навчання потенціал громади результати розвиток територіальні освітня регіону територіальні фахівців управління результати спеціальність освітня сталий територіальні якість рекреація туристичних результати потенціал територіальні фахівців розвиток фахівців сталий кадровий спеціальність спеціальність сталий</div>
<div style="position:absolute;left:232px;top:650px;width:110px;height:23px;overflow:hidden;font-size:3.4px;line-height:3.8px;color:#444;text-align:justify;font-family:'Liberation Sans',sans-serif;">територіальні підготовки рекреація кадровий туризм розвиток розвиток сталий регіону розвиток кадровий стейкхолдери навчання розвиток кадровий регіону територіальні громади фахівців навчання освітня освітня розвиток потенціал громади потенціал регіону результати туризм фахівців праці розвиток навчання фахівців фахівців туристичних кадровий дестинацій кадровий громади регіону підготовки регіону громади туризм туризм освітня громади рекреація фахівців розвиток рекреація туристичних компетентності дестинацій стейкхолдери розвиток результати сталий регіону громади розвиток ринку розвиток рекреація підготовки туристичних розвиток навчання стейкхолдери праці стейкхолдери навчання туристичних навчання розвиток розвиток управління освітня управління магістр праці розвиток рекреація управління туризм туризм громади компетентності фахівців управління спеціальність спеціальність управління освітня освітня розвиток навчання рекреація дестинацій територіальні навчання управління ринку регіону регіону освітня потенціал регіону якість територіальні кадровий сталий магістр підготовки потенціал спеціальність ринку управління програма навчання фахівців праці компетентності магістр територіальні ринку територіальні управління спеціальність</div>
<div style="position:absolute;left:210.5px;top:695.5px;width:140.5px;height:79px;background:#c8c8c8"></div>
<div style="position:absolute;left:211.5px;top:696.5px;width:138.5px;height:77px;overflow:hidden;background:radial-gradient(ellipse 75% 85% at 45% 72%,#fdfdf8 0,#f6f7ee 40%,#e3e9cb 100%)"></div>
<div id="t70" class="t" style="left:200.00px;top:694.00px;font-size:12px;font-weight:400;color:#555;font-family:'Liberation Sans',sans-serif;">5</div>
<div style="position:absolute;left:211.5px;top:696.5px;width:1.5px;height:77px;background:#766c56"></div>
<svg style="position:absolute;left:212.5px;top:696.5px;" width="40" height="77" viewBox="0 0 40 77"><path d="M1 0 Q8 38.5 18 77" fill="none" stroke="#6a604c" stroke-width=".6"/><path d="M4 0 Q3 38.5 14 77" fill="none" stroke="#8a806c" stroke-width=".5"/><path d="M38 19.25 Q10 38.5 16 77" fill="none" stroke="#b8b8a8" stroke-width=".5"/></svg>
<div style="position:absolute;left:211.5px;top:704px;width:19px;height:6px;background:#a8321b;clip-path:polygon(0 0,80% 0,100% 50%,80% 100%,0 100%)"></div>
<div id="t71" class="t" style="left:236.00px;top:704.00px;font-size:6px;font-weight:700;color:#1f3864;font-family:'Liberation Sans',sans-serif;transform:scaleX(0.8252);">Виклики, які стоять перед ОП</div>
<div style="position:absolute;left:229px;top:713px;width:113px;height:8px;overflow:hidden;font-size:3.4px;line-height:3.8px;color:#333;text-align:justify;font-family:'Liberation Sans',sans-serif;font-weight:700">управління територіальні територіальні освітня праці сталий розвиток туризм освітня сталий розвиток управління розвиток управління громади туризм навчання дестинацій спеціальність програма підготовки компетентності територіальні територіальні спеціальність громади розвиток сталий дестинацій спеціальність</div>
<div style="position:absolute;left:233px;top:721.0px;width:109px;height:6.4px;overflow:hidden;font-size:3.4px;line-height:3.8px;color:#444;text-align:justify;font-family:'Liberation Sans',sans-serif;">програма кадровий регіону потенціал програма сталий дестинацій територіальні праці спеціальність освітня сталий туристичних праці підготовки туризм територіальні туризм територіальні регіону результати потенціал праці територіальні спеціальність розвиток</div>
<div style="position:absolute;left:229px;top:722.0px;width:2px;height:1.5px;background:#d02020"></div>
<div style="position:absolute;left:233px;top:727.4px;width:109px;height:6.4px;overflow:hidden;font-size:3.4px;line-height:3.8px;color:#444;text-align:justify;font-family:'Liberation Sans',sans-serif;">громади територіальні кадровий результати територіальні потенціал спеціальність регіону праці управління ринку дестинацій стейкхолдери праці підготовки туристичних компетентності кадровий ринку туристичних регіону компетентності якість розвиток дестинацій сталий</div>
<div style="position:absolute;left:229px;top:728.4px;width:2px;height:1.5px;background:#d02020"></div>
<div style="position:absolute;left:233px;top:733.8px;width:109px;height:6.4px;overflow:hidden;font-size:3.4px;line-height:3.8px;color:#444;text-align:justify;font-family:'Liberation Sans',sans-serif;">управління результати рекреація компетентності фахівців управління потенціал управління праці кадровий навчання дестинацій стейкхолдери громади розвиток компетентності кадровий розвиток результати ринку територіальні стейкхолдери підготовки ринку регіону фахівців</div>
<div style="position:absolute;left:229px;top:734.8px;width:2px;height:1.5px;background:#d02020"></div>
<div style="position:absolute;left:233px;top:740.2px;width:109px;height:6.4px;overflow:hidden;font-size:3.4px;line-height:3.8px;color:#444;text-align:justify;font-family:'Liberation Sans',sans-serif;">підготовки туристичних навчання фахівців освітня підготовки спеціальність праці праці результати освітня стейкхолдери підготовки територіальні туризм якість територіальні туристичних дестинацій розвиток кадровий дестинацій туристичних потенціал потенціал програма</div>
<div style="position:absolute;left:229px;top:741.2px;width:2px;height:1.5px;background:#d02020"></div>
<div style="position:absolute;left:233px;top:746.6px;width:109px;height:6.4px;overflow:hidden;font-size:3.4px;line-height:3.8px;color:#444;text-align:justify;font-family:'Liberation Sans',sans-serif;">сталий розвиток потенціал сталий управління ринку компетентності потенціал стейкхолдери управління спеціальність територіальні магістр громади результати підготовки туристичних потенціал програма розвиток результати розвиток ринку туристичних потенціал освітня</div>
<div style="position:absolute;left:229px;top:747.6px;width:2px;height:1.5px;background:#d02020"></div>
<div style="position:absolute;left:233px;top:753.0px;width:109px;height:6.4px;overflow:hidden;font-size:3.4px;line-height:3.8px;color:#444;text-align:justify;font-family:'Liberation Sans',sans-serif;">рекреація туристичних розвиток потенціал туристичних туризм кадровий туристичних потенціал дестинацій праці освітня підготовки спеціальність ринку потенціал туризм управління програма територіальні результати кадровий дестинацій розвиток потенціал програма</div>
<div style="position:absolute;left:229px;top:754.0px;width:2px;height:1.5px;background:#d02020"></div>
<div style="position:absolute;left:233px;top:759.4px;width:109px;height:6.4px;overflow:hidden;font-size:3.4px;line-height:3.8px;color:#444;text-align:justify;font-family:'Liberation Sans',sans-serif;">розвиток регіону якість рекреація якість територіальні сталий регіону якість праці територіальні компетентності розвиток потенціал фахівців розвиток освітня потенціал програма освітня освітня навчання територіальні спеціальність регіону територіальні</div>
<div style="position:absolute;left:229px;top:760.4px;width:2px;height:1.5px;background:#d02020"></div>
<div style="position:absolute;left:367.5px;top:303.5px;width:11.5px;height:464px;background:#dedede"></div>
<div style="position:absolute;left:367.5px;top:303.5px;width:11.5px;height:388px;background:#f2f2f2;border:1px solid #d2d2d2;box-sizing:border-box"></div>
<div style="position:absolute;left:367.5px;top:303.5px;width:11.5px;height:11.5px;background:#fdfdfd;border:1px solid #dadada;box-sizing:border-box"></div>
<svg style="position:absolute;left:370px;top:307px;" width="6" height="4" viewBox="0 0 6 4"><path d="M0 4 L3 0.5 L6 4 Z" fill="#555"/></svg>
<div style="position:absolute;left:381.5px;top:301.5px;width:1.2px;height:466px;background:#d4d4d4"></div>
<div style="position:absolute;left:1396.6px;top:303px;width:12px;height:464px;background:#e4e4e4"></div>
<div style="position:absolute;left:1396.6px;top:303px;width:12px;height:12px;background:#fdfdfd"></div>
<svg style="position:absolute;left:1399.5px;top:307px;" width="6" height="4" viewBox="0 0 6 4"><path d="M0 4 L3 0.5 L6 4 Z" fill="#555"/></svg>
<div style="position:absolute;left:1396.6px;top:315px;width:12px;height:61px;background:#fbfbfb;border:1px solid #d8d8d8;box-sizing:border-box"></div>
<div style="position:absolute;left:1396.6px;top:738px;width:12px;height:12px;background:#fdfdfd"></div>
<svg style="position:absolute;left:1399.5px;top:742px;" width="6" height="4" viewBox="0 0 6 4"><path d="M0 0 L3 3.5 L6 0 Z" fill="#555"/></svg>
<svg style="position:absolute;left:1399.5px;top:754px;" width="6" height="8" viewBox="0 0 6 8"><path d="M0 4 L3 1 L6 4 M0 7.5 L3 4.5 L6 7.5" fill="none" stroke="#555" stroke-width="1"/></svg>
<div style="position:absolute;left:470.5px;top:310.8px;width:838.3px;height:471.5px;background:radial-gradient(ellipse 62% 140% at 44% 76%,#ffffff 0%,#fbfbf7 28%,#f2f4e8 58%,#e6ebd2 82%,#dce5be 100%)"></div>
<svg style="position:absolute;left:470px;top:456px;overflow:hidden" width="260" height="326" viewBox="0 0 260 326"><path d="M200 -55 C194.0 -48.5 175.7 -29.2 164 -16 C152.3 -2.8 140.7 9.0 130 24 C119.3 39.0 108.3 59.0 100 74 C91.7 89.0 85.3 101.3 80 114 C74.7 126.7 71.0 135.7 68 150 C65.0 164.3 63.0 182.5 62 200 C61.0 217.5 60.8 234.0 62 255 C63.2 276.0 67.8 314.2 69 326" fill="none" stroke="#b9baa6" stroke-width="1"/><path d="M170 66 C163.3 73.7 142.0 97.3 130 112 C118.0 126.7 106.3 141.8 98 154 C89.7 166.2 84.1 176.4 80 185 C75.9 193.6 75.4 194.2 73.6 205.5 C71.8 216.8 68.6 238.9 69 253 C69.4 267.1 72.2 277.8 76 290 C79.8 302.2 89.3 320.0 92 326" fill="none" stroke="#6e6450" stroke-width="1.2"/><path d="M13 0 C14.2 10.0 17.2 40.0 20 60 C22.8 80.0 27.3 105.0 30 120 C32.7 135.0 33.8 135.8 36 150 C38.2 164.2 38.9 186.3 43 205 C47.1 223.7 54.4 246.2 60.6 262 C66.8 277.8 74.8 289.3 80 300 C85.2 310.7 90.0 321.7 92 326" fill="none" stroke="#6e6450" stroke-width="1.3"/><path d="M37 0 C36.5 10.7 34.3 39.0 34 64 C33.7 89.0 33.5 126.5 35 150 C36.5 173.5 39.5 186.3 43 205 C46.5 223.7 51.2 246.2 56 262 C60.8 277.8 68.0 289.3 72 300 C76.0 310.7 78.7 321.7 80 326" fill="none" stroke="#7a705c" stroke-width="1.2"/><path d="M10 60 C10.7 65.3 11.0 77.0 14 92 C17.0 107.0 23.7 131.2 28 150 C32.3 168.8 35.5 186.3 40 205 C44.5 223.7 50.7 241.8 55 262 C59.3 282.2 64.2 315.3 66 326" fill="none" stroke="#c8c9b8" stroke-width="1"/></svg>
<div style="position:absolute;left:470.5px;top:456.8px;width:12px;height:325.5px;background:#776c55"></div>
<div style="position:absolute;left:470.5px;top:608.4px;width:120.1px;height:53.1px;background:#a8321b;clip-path:polygon(0 0,78.2% 0,100% 50%,78.2% 100%,0 100%)"></div>
<svg style="position:absolute;left:470.5px;top:310.5px;" width="117" height="147" viewBox="0 0 117 147"><defs><clipPath id="egl"><path d="M2 70 H52 Q50 90 46 100 L54 112 Q44 118 40 130 Q30 124 20 132 Q10 126 2 120 Z"/></clipPath></defs><rect x="0" y="0" width="117" height="147" fill="#f2f2ee"/><g fill="#e4e4e0"><rect x="0" y="138" width="3" height="4"/><rect x="6" y="142" width="3" height="4"/><rect x="12" y="138" width="3" height="4"/><rect x="18" y="142" width="3" height="4"/><rect x="24" y="138" width="3" height="4"/><rect x="30" y="142" width="3" height="4"/><rect x="36" y="138" width="3" height="4"/><rect x="42" y="142" width="3" height="4"/><rect x="48" y="138" width="3" height="4"/><rect x="54" y="142" width="3" height="4"/><rect x="60" y="138" width="3" height="4"/><rect x="66" y="142" width="3" height="4"/><rect x="72" y="138" width="3" height="4"/><rect x="78" y="142" width="3" height="4"/><rect x="84" y="138" width="3" height="4"/><rect x="90" y="142" width="3" height="4"/><rect x="96" y="138" width="3" height="4"/><rect x="102" y="142" width="3" height="4"/><rect x="108" y="138" width="3" height="4"/><rect x="114" y="142" width="3" height="4"/></g><path d="M0 0 H117 V118 Q117 138 88 140 Q66 140 58 146 Q50 140 28 140 Q0 138 0 118 Z" fill="#2a86e0"/><rect x="0" y="0" width="58.3" height="66.8" fill="#f81c1c"/><path d="M0 66.8 V50 Q6 40 16 44 Q22 36 30 40.6 V66.8 Z" fill="#2a86e0"/><path d="M25.4 1.7 H33 V11.9 H44 V19.5 H33 V24.5 H47.3 V32.1 H33 V40.6 H25.4 V32.1 H11 V24.5 H25.4 V19.5 H14.4 V11.9 H25.4 Z" fill="#d8d8d8"/><rect x="58.3" y="0" width="28.7" height="31.3" fill="#2a8ae0"/><rect x="58.3" y="7.5" width="28.7" height="10" fill="#b8a038"/><rect x="58.3" y="27" width="28.7" height="4.3" fill="#b8a038"/><rect x="87" y="0" width="30" height="66.8" fill="#dadada"/><path d="M99 4 Q104 1 109 4 L112 9 Q114 16 113 24 Q116 40 114 60 L113 64 H104 L103 56 Q100 52 98 57 L97 64 H91 L94 52 Q92 42 96 34 L92 28 L90 24 L97 22 Q95 14 97 9 Z" fill="#f41818"/><path d="M1 66.8 H58.3 V141 Q50 138 30 138 Q1 136 1 118 Z" fill="#2a86e0"/><g clip-path="url(#egl)"><rect x="3.0" y="70.0" width="6.2" height="6.2" fill="#f01818"/><rect x="3.0" y="82.4" width="6.2" height="6.2" fill="#f01818"/><rect x="3.0" y="94.8" width="6.2" height="6.2" fill="#f01818"/><rect x="3.0" y="107.2" width="6.2" height="6.2" fill="#f01818"/><rect x="3.0" y="119.6" width="6.2" height="6.2" fill="#f01818"/><rect x="9.2" y="76.2" width="6.2" height="6.2" fill="#f01818"/><rect x="9.2" y="88.6" width="6.2" height="6.2" fill="#f01818"/><rect x="9.2" y="101.0" width="6.2" height="6.2" fill="#f01818"/><rect x="9.2" y="113.4" width="6.2" height="6.2" fill="#f01818"/><rect x="15.4" y="70.0" width="6.2" height="6.2" fill="#f01818"/><rect x="15.4" y="82.4" width="6.2" height="6.2" fill="#f01818"/><rect x="15.4" y="94.8" width="6.2" height="6.2" fill="#f01818"/><rect x="15.4" y="107.2" width="6.2" height="6.2" fill="#f01818"/><rect x="15.4" y="119.6" width="6.2" height="6.2" fill="#f01818"/><rect x="21.6" y="76.2" width="6.2" height="6.2" fill="#f01818"/><rect x="21.6" y="88.6" width="6.2" height="6.2" fill="#f01818"/><rect x="21.6" y="101.0" width="6.2" height="6.2" fill="#f01818"/><rect x="21.6" y="113.4" width="6.2" height="6.2" fill="#f01818"/><rect x="27.8" y="70.0" width="6.2" height="6.2" fill="#f01818"/><rect x="27.8" y="82.4" width="6.2" height="6.2" fill="#f01818"/><rect x="27.8" y="94.8" width="6.2" height="6.2" fill="#f01818"/><rect x="27.8" y="107.2" width="6.2" height="6.2" fill="#f01818"/><rect x="27.8" y="119.6" width="6.2" height="6.2" fill="#f01818"/><rect x="34.0" y="76.2" width="6.2" height="6.2" fill="#f01818"/><rect x="34.0" y="88.6" width="6.2" height="6.2" fill="#f01818"/><rect x="34.0" y="101.0" width="6.2" height="6.2" fill="#f01818"/><rect x="34.0" y="113.4" width="6.2" height="6.2" fill="#f01818"/><rect x="40.2" y="70.0" width="6.2" height="6.2" fill="#f01818"/><rect x="40.2" y="82.4" width="6.2" height="6.2" fill="#f01818"/><rect x="40.2" y="94.8" width="6.2" height="6.2" fill="#f01818"/><rect x="40.2" y="107.2" width="6.2" height="6.2" fill="#f01818"/><rect x="40.2" y="119.6" width="6.2" height="6.2" fill="#f01818"/><rect x="46.4" y="76.2" width="6.2" height="6.2" fill="#f01818"/><rect x="46.4" y="88.6" width="6.2" height="6.2" fill="#f01818"/><rect x="46.4" y="101.0" width="6.2" height="6.2" fill="#f01818"/><rect x="46.4" y="113.4" width="6.2" height="6.2" fill="#f01818"/><rect x="3.0" y="76.2" width="6.2" height="6.2" fill="#f4f4f4"/><rect x="3.0" y="88.6" width="6.2" height="6.2" fill="#f4f4f4"/><rect x="3.0" y="101.0" width="6.2" height="6.2" fill="#f4f4f4"/><rect x="3.0" y="113.4" width="6.2" height="6.2" fill="#f4f4f4"/><rect x="9.2" y="70.0" width="6.2" height="6.2" fill="#f4f4f4"/><rect x="9.2" y="82.4" width="6.2" height="6.2" fill="#f4f4f4"/><rect x="9.2" y="94.8" width="6.2" height="6.2" fill="#f4f4f4"/><rect x="9.2" y="107.2" width="6.2" height="6.2" fill="#f4f4f4"/><rect x="9.2" y="119.6" width="6.2" height="6.2" fill="#f4f4f4"/><rect x="15.4" y="76.2" width="6.2" height="6.2" fill="#f4f4f4"/><rect x="15.4" y="88.6" width="6.2" height="6.2" fill="#f4f4f4"/><rect x="15.4" y="101.0" width="6.2" height="6.2" fill="#f4f4f4"/><rect x="15.4" y="113.4" width="6.2" height="6.2" fill="#f4f4f4"/><rect x="21.6" y="70.0" width="6.2" height="6.2" fill="#f4f4f4"/><rect x="21.6" y="82.4" width="6.2" height="6.2" fill="#f4f4f4"/><rect x="21.6" y="94.8" width="6.2" height="6.2" fill="#f4f4f4"/><rect x="21.6" y="107.2" width="6.2" height="6.2" fill="#f4f4f4"/><rect x="21.6" y="119.6" width="6.2" height="6.2" fill="#f4f4f4"/><rect x="27.8" y="76.2" width="6.2" height="6.2" fill="#f4f4f4"/><rect x="27.8" y="88.6" width="6.2" height="6.2" fill="#f4f4f4"/><rect x="27.8" y="101.0" width="6.2" height="6.2" fill="#f4f4f4"/><rect x="27.8" y="113.4" width="6.2" height="6.2" fill="#f4f4f4"/><rect x="34.0" y="70.0" width="6.2" height="6.2" fill="#f4f4f4"/><rect x="34.0" y="82.4" width="6.2" height="6.2" fill="#f4f4f4"/><rect x="34.0" y="94.8" width="6.2" height="6.2" fill="#f4f4f4"/><rect x="34.0" y="107.2" width="6.2" height="6.2" fill="#f4f4f4"/><rect x="34.0" y="119.6" width="6.2" height="6.2" fill="#f4f4f4"/><rect x="40.2" y="76.2" width="6.2" height="6.2" fill="#f4f4f4"/><rect x="40.2" y="88.6" width="6.2" height="6.2" fill="#f4f4f4"/><rect x="40.2" y="101.0" width="6.2" height="6.2" fill="#f4f4f4"/><rect x="40.2" y="113.4" width="6.2" height="6.2" fill="#f4f4f4"/><rect x="46.4" y="70.0" width="6.2" height="6.2" fill="#f4f4f4"/><rect x="46.4" y="82.4" width="6.2" height="6.2" fill="#f4f4f4"/><rect x="46.4" y="94.8" width="6.2" height="6.2" fill="#f4f4f4"/><rect x="46.4" y="107.2" width="6.2" height="6.2" fill="#f4f4f4"/><rect x="46.4" y="119.6" width="6.2" height="6.2" fill="#f4f4f4"/></g><path d="M10 106 L16 116 L22 108 M34 106 L40 116 L46 108" fill="none" stroke="#c8a828" stroke-width="2.2"/><path d="M22 72 Q28 68 30 74" fill="none" stroke="#c8a828" stroke-width="2"/><path d="M58.3 66.8 H116 V118 Q116 136 88 138 Q66 138 58.3 142 Z" fill="#bca53a"/><path d="M66 74 Q74 66 86 72 L90 80 Q100 70 112 76 L108 96 Q114 104 110 116 L100 112 L96 128 L88 124 L86 134 L80 126 L70 130 L72 116 L62 114 Q60 104 68 98 Q60 88 66 74 Z" fill="#141414"/><path d="M70 98 Q86 108 104 94" fill="none" stroke="#b8b8b8" stroke-width="2.2"/><path d="M68 112 L76 118 L72 124 M100 110 L94 118 L102 122" fill="none" stroke="#f02020" stroke-width="2.4"/><path d="M74 72 L80 78" stroke="#f02020" stroke-width="2"/><path d="M29.6 32.1 H86.2 V90 Q86.2 98 78 98 H37.6 Q29.6 98 29.6 90 Z" fill="#f81c1c"/><path d="M40 40 L46 46 Q52 40 58 44 L62 41 L60 50 Q64 54 62 60 L56 62 Q62 70 68 72 L76 84 L80 90 L72 90 L66 80 L58 76 L50 84 L54 90 L44 90 L42 82 L46 76 Q40 68 42 60 L36 58 L40 52 L36 48 Z" fill="#dcdcdc"/><path d="M68 38 L72 48 L76 38 L80 46 L72 62 L66 50 Z" fill="none" stroke="#dcdcdc" stroke-width="2.2"/><circle cx="60" cy="39" r="2" fill="#e8c020"/></svg>
<div id="t72" class="t" style="left:584.00px;top:444.00px;font-size:39.5px;font-weight:700;color:#6aa78e;font-family:'Liberation Sans',sans-serif;transform:scaleX(1.0385);text-shadow:1.5px 2px 1.5px rgba(60,60,50,.45);">Магістерська програма</div>
<div id="t73" class="t" style="left:584.00px;top:490.00px;font-size:39.5px;font-weight:700;color:#6aa78e;font-family:'Liberation Sans',sans-serif;transform:scaleX(0.9683);text-shadow:1.5px 2px 1.5px rgba(60,60,50,.45);">«Розвиток туристичних</div>
<div id="t74" class="t" style="left:584.00px;top:535.00px;font-size:39.5px;font-weight:700;color:#6aa78e;font-family:'Liberation Sans',sans-serif;transform:scaleX(0.9694);text-shadow:1.5px 2px 1.5px rgba(60,60,50,.45);">дестинацій» як відповідь на</div>
<div id="t75" class="t" style="left:584.00px;top:581.00px;font-size:39.5px;font-weight:700;color:#6aa78e;font-family:'Liberation Sans',sans-serif;transform:scaleX(1.0065);text-shadow:1.5px 2px 1.5px rgba(60,60,50,.45);">кадровий дефіцит в ОМС</div>
<svg style="position:absolute;left:583px;top:571px;opacity:.7" width="228" height="3" viewBox="0 0 228 3"><path d="M0 1.5 L1.5 0.5 L3.0 2.5 L4.5 0.5 L6.0 2.5 L7.5 0.5 L9.0 2.5 L10.5 0.5 L12.0 2.5 L13.5 0.5 L15.0 2.5 L16.5 0.5 L18.0 2.5 L19.5 0.5 L21.0 2.5 L22.5 0.5 L24.0 2.5 L25.5 0.5 L27.0 2.5 L28.5 0.5 L30.0 2.5 L31.5 0.5 L33.0 2.5 L34.5 0.5 L36.0 2.5 L37.5 0.5 L39.0 2.5 L40.5 0.5 L42.0 2.5 L43.5 0.5 L45.0 2.5 L46.5 0.5 L48.0 2.5 L49.5 0.5 L51.0 2.5 L52.5 0.5 L54.0 2.5 L55.5 0.5 L57.0 2.5 L58.5 0.5 L60.0 2.5 L61.5 0.5 L63.0 2.5 L64.5 0.5 L66.0 2.5 L67.5 0.5 L69.0 2.5 L70.5 0.5 L72.0 2.5 L73.5 0.5 L75.0 2.5 L76.5 0.5 L78.0 2.5 L79.5 0.5 L81.0 2.5 L82.5 0.5 L84.0 2.5 L85.5 0.5 L87.0 2.5 L88.5 0.5 L90.0 2.5 L91.5 0.5 L93.0 2.5 L94.5 0.5 L96.0 2.5 L97.5 0.5 L99.0 2.5 L100.5 0.5 L102.0 2.5 L103.5 0.5 L105.0 2.5 L106.5 0.5 L108.0 2.5 L109.5 0.5 L111.0 2.5 L112.5 0.5 L114.0 2.5 L115.5 0.5 L117.0 2.5 L118.5 0.5 L120.0 2.5 L121.5 0.5 L123.0 2.5 L124.5 0.5 L126.0 2.5 L127.5 0.5 L129.0 2.5 L130.5 0.5 L132.0 2.5 L133.5 0.5 L135.0 2.5 L136.5 0.5 L138.0 2.5 L139.5 0.5 L141.0 2.5 L142.5 0.5 L144.0 2.5 L145.5 0.5 L147.0 2.5 L148.5 0.5 L150.0 2.5 L151.5 0.5 L153.0 2.5 L154.5 0.5 L156.0 2.5 L157.5 0.5 L159.0 2.5 L160.5 0.5 L162.0 2.5 L163.5 0.5 L165.0 2.5 L166.5 0.5 L168.0 2.5 L169.5 0.5 L171.0 2.5 L172.5 0.5 L174.0 2.5 L175.5 0.5 L177.0 2.5 L178.5 0.5 L180.0 2.5 L181.5 0.5 L183.0 2.5 L184.5 0.5 L186.0 2.5 L187.5 0.5 L189.0 2.5 L190.5 0.5 L192.0 2.5 L193.5 0.5 L195.0 2.5 L196.5 0.5 L198.0 2.5 L199.5 0.5 L201.0 2.5 L202.5 0.5 L204.0 2.5 L205.5 0.5 L207.0 2.5 L208.5 0.5 L210.0 2.5 L211.5 0.5 L213.0 2.5 L214.5 0.5 L216.0 2.5 L217.5 0.5 L219.0 2.5 L220.5 0.5 L222.0 2.5 L223.5 0.5 L225.0 2.5 L226.5 0.5 L228.0 2.5" fill="none" stroke="#e03030" stroke-width=".7"/></svg>
<div id="t76" class="t" style="left:1134.00px;top:665.00px;font-size:19.5px;font-weight:700;color:#505050;font-family:'Liberation Sans',sans-serif;transform:scaleX(1.0321);">Галина Щука,</div>
<div id="t77" class="t" style="left:1001.70px;top:693.00px;font-size:19.5px;font-weight:700;color:#505050;font-family:'Liberation Sans',sans-serif;transform:scaleX(1.0618);">доктор педагогічних наук,</div>
<div id="t78" class="t" style="left:1161.00px;top:720.00px;font-size:19.5px;font-weight:700;color:#505050;font-family:'Liberation Sans',sans-serif;transform:scaleX(1.1057);">професор</div>
<svg style="position:absolute;left:955px;top:315px;" width="112" height="100" viewBox="0 0 112 100"><g fill="none" stroke="#1c3466" stroke-width="2.2" stroke-linejoin="round"><path d="M28 18.7 L33.8 11.7 L56 9.1 L79.3 11.7 L84.6 18.7"/><path d="M30.9 20.4 L35 16.3 L56 14.6 L77 16.3 L81.7 21.6"/><path d="M29.8 22 Q24 31 12 35 V42.5"/><path d="M82.8 22 Q88 31 100.9 35 V42.5"/><path d="M8.2 45 Q22 45 36 49"/><path d="M103.8 45 Q90 45 76 49"/><path d="M8.4 45.5 Q8 72 31.5 91" stroke-width="2.4"/><path d="M103.6 45.5 Q104 72 80.5 91" stroke-width="2.4"/></g><g fill="none" stroke="#1c3466" stroke-width="1.7"><path d="M56 21 Q36 36 36.2 56 Q36 78 50.2 96.8"/><path d="M56 21 Q76 36 75.8 56 Q76 78 61.3 96.8"/><path d="M36 49 Q50 60 56 80.5"/><path d="M76 49 Q62 60 56 80.5"/><path d="M49 60 Q56 49 63 60"/><path d="M54 84 L56 74 L58 84"/></g></svg>
<div style="position:absolute;left:1082.2px;top:332px;width:3.5px;height:69px;background:#f5bf14"></div>
<div id="t79" class="t" style="left:1103.10px;top:335.00px;font-size:17px;font-weight:700;color:#1c3160;font-family:'Liberation Sans',sans-serif;transform:scaleX(0.9109);">Закарпатський</div>
<div id="t80" class="t" style="left:1103.10px;top:357.00px;font-size:17px;font-weight:700;color:#1c3160;font-family:'Liberation Sans',sans-serif;transform:scaleX(0.8985);">угорський університет</div>
<div id="t81" class="t" style="left:1103.10px;top:379.00px;font-size:17px;font-weight:700;color:#1c3160;font-family:'Liberation Sans',sans-serif;transform:scaleX(0.9187);">імені Ференца Ракоці ІІ</div>
<div style="position:absolute;left:211.5px;top:317px;width:138.5px;height:79px;overflow:hidden"><div style="position:absolute;left:0;top:0;width:1600px;height:900px;transform-origin:0 0;transform:scale(0.16522) translate(-470.5px,-310.8px)">
<div style="position:absolute;left:470.5px;top:310.8px;width:838.3px;height:471.5px;background:radial-gradient(ellipse 62% 140% at 44% 76%,#ffffff 0%,#fbfbf7 28%,#f2f4e8 58%,#e6ebd2 82%,#dce5be 100%)"></div>
<svg style="position:absolute;left:470px;top:456px;overflow:hidden" width="260" height="326" viewBox="0 0 260 326"><path d="M200 -55 C194.0 -48.5 175.7 -29.2 164 -16 C152.3 -2.8 140.7 9.0 130 24 C119.3 39.0 108.3 59.0 100 74 C91.7 89.0 85.3 101.3 80 114 C74.7 126.7 71.0 135.7 68 150 C65.0 164.3 63.0 182.5 62 200 C61.0 217.5 60.8 234.0 62 255 C63.2 276.0 67.8 314.2 69 326" fill="none" stroke="#b9baa6" stroke-width="1"/><path d="M170 66 C163.3 73.7 142.0 97.3 130 112 C118.0 126.7 106.3 141.8 98 154 C89.7 166.2 84.1 176.4 80 185 C75.9 193.6 75.4 194.2 73.6 205.5 C71.8 216.8 68.6 238.9 69 253 C69.4 267.1 72.2 277.8 76 290 C79.8 302.2 89.3 320.0 92 326" fill="none" stroke="#6e6450" stroke-width="1.2"/><path d="M13 0 C14.2 10.0 17.2 40.0 20 60 C22.8 80.0 27.3 105.0 30 120 C32.7 135.0 33.8 135.8 36 150 C38.2 164.2 38.9 186.3 43 205 C47.1 223.7 54.4 246.2 60.6 262 C66.8 277.8 74.8 289.3 80 300 C85.2 310.7 90.0 321.7 92 326" fill="none" stroke="#6e6450" stroke-width="1.3"/><path d="M37 0 C36.5 10.7 34.3 39.0 34 64 C33.7 89.0 33.5 126.5 35 150 C36.5 173.5 39.5 186.3 43 205 C46.5 223.7 51.2 246.2 56 262 C60.8 277.8 68.0 289.3 72 300 C76.0 310.7 78.7 321.7 80 326" fill="none" stroke="#7a705c" stroke-width="1.2"/><path d="M10 60 C10.7 65.3 11.0 77.0 14 92 C17.0 107.0 23.7 131.2 28 150 C32.3 168.8 35.5 186.3 40 205 C44.5 223.7 50.7 241.8 55 262 C59.3 282.2 64.2 315.3 66 326" fill="none" stroke="#c8c9b8" stroke-width="1"/></svg>
<div style="position:absolute;left:470.5px;top:456.8px;width:12px;height:325.5px;background:#776c55"></div>
<div style="position:absolute;left:470.5px;top:608.4px;width:120.1px;height:53.1px;background:#a8321b;clip-path:polygon(0 0,78.2% 0,100% 50%,78.2% 100%,0 100%)"></div>
<svg style="position:absolute;left:470.5px;top:310.5px;" width="117" height="147" viewBox="0 0 117 147"><defs><clipPath id="egl"><path d="M2 70 H52 Q50 90 46 100 L54 112 Q44 118 40 130 Q30 124 20 132 Q10 126 2 120 Z"/></clipPath></defs><rect x="0" y="0" width="117" height="147" fill="#f2f2ee"/><g fill="#e4e4e0"><rect x="0" y="138" width="3" height="4"/><rect x="6" y="142" width="3" height="4"/><rect x="12" y="138" width="3" height="4"/><rect x="18" y="142" width="3" height="4"/><rect x="24" y="138" width="3" height="4"/><rect x="30" y="142" width="3" height="4"/><rect x="36" y="138" width="3" height="4"/><rect x="42" y="142" width="3" height="4"/><rect x="48" y="138" width="3" height="4"/><rect x="54" y="142" width="3" height="4"/><rect x="60" y="138" width="3" height="4"/><rect x="66" y="142" width="3" height="4"/><rect x="72" y="138" width="3" height="4"/><rect x="78" y="142" width="3" height="4"/><rect x="84" y="138" width="3" height="4"/><rect x="90" y="142" width="3" height="4"/><rect x="96" y="138" width="3" height="4"/><rect x="102" y="142" width="3" height="4"/><rect x="108" y="138" width="3" height="4"/><rect x="114" y="142" width="3" height="4"/></g><path d="M0 0 H117 V118 Q117 138 88 140 Q66 140 58 146 Q50 140 28 140 Q0 138 0 118 Z" fill="#2a86e0"/><rect x="0" y="0" width="58.3" height="66.8" fill="#f81c1c"/><path d="M0 66.8 V50 Q6 40 16 44 Q22 36 30 40.6 V66.8 Z" fill="#2a86e0"/><path d="M25.4 1.7 H33 V11.9 H44 V19.5 H33 V24.5 H47.3 V32.1 H33 V40.6 H25.4 V32.1 H11 V24.5 H25.4 V19.5 H14.4 V11.9 H25.4 Z" fill="#d8d8d8"/><rect x="58.3" y="0" width="28.7" height="31.3" fill="#2a8ae0"/><rect x="58.3" y="7.5" width="28.7" height="10" fill="#b8a038"/><rect x="58.3" y="27" width="28.7" height="4.3" fill="#b8a038"/><rect x="87" y="0" width="30" height="66.8" fill="#dadada"/><path d="M99 4 Q104 1 109 4 L112 9 Q114 16 113 24 Q116 40 114 60 L113 64 H104 L103 56 Q100 52 98 57 L97 64 H91 L94 52 Q92 42 96 34 L92 28 L90 24 L97 22 Q95 14 97 9 Z" fill="#f41818"/><path d="M1 66.8 H58.3 V141 Q50 138 30 138 Q1 136 1 118 Z" fill="#2a86e0"/><g clip-path="url(#egl)"><rect x="3.0" y="70.0" width="6.2" height="6.2" fill="#f01818"/><rect x="3.0" y="82.4" width="6.2" height="6.2" fill="#f01818"/><rect x="3.0" y="94.8" width="6.2" height="6.2" fill="#f01818"/><rect x="3.0" y="107.2" width="6.2" height="6.2" fill="#f01818"/><rect x="3.0" y="119.6" width="6.2" height="6.2" fill="#f01818"/><rect x="9.2" y="76.2" width="6.2" height="6.2" fill="#f01818"/><rect x="9.2" y="88.6" width="6.2" height="6.2" fill="#f01818"/><rect x="9.2" y="101.0" width="6.2" height="6.2" fill="#f01818"/><rect x="9.2" y="113.4" width="6.2" height="6.2" fill="#f01818"/><rect x="15.4" y="70.0" width="6.2" height="6.2" fill="#f01818"/><rect x="15.4" y="82.4" width="6.2" height="6.2" fill="#f01818"/><rect x="15.4" y="94.8" width="6.2" height="6.2" fill="#f01818"/><rect x="15.4" y="107.2" width="6.2" height="6.2" fill="#f01818"/><rect x="15.4" y="119.6" width="6.2" height="6.2" fill="#f01818"/><rect x="21.6" y="76.2" width="6.2" height="6.2" fill="#f01818"/><rect x="21.6" y="88.6" width="6.2" height="6.2" fill="#f01818"/><rect x="21.6" y="101.0" width="6.2" height="6.2" fill="#f01818"/><rect x="21.6" y="113.4" width="6.2" height="6.2" fill="#f01818"/><rect x="27.8" y="70.0" width="6.2" height="6.2" fill="#f01818"/><rect x="27.8" y="82.4" width="6.2" height="6.2" fill="#f01818"/><rect x="27.8" y="94.8" width="6.2" height="6.2" fill="#f01818"/><rect x="27.8" y="107.2" width="6.2" height="6.2" fill="#f01818"/><rect x="27.8" y="119.6" width="6.2" height="6.2" fill="#f01818"/><rect x="34.0" y="76.2" width="6.2" height="6.2" fill="#f01818"/><rect x="34.0" y="88.6" width="6.2" height="6.2" fill="#f01818"/><rect x="34.0" y="101.0" width="6.2" height="6.2" fill="#f01818"/><rect x="34.0" y="113.4" width="6.2" height="6.2" fill="#f01818"/><rect x="40.2" y="70.0" width="6.2" height="6.2" fill="#f01818"/><rect x="40.2" y="82.4" width="6.2" height="6.2" fill="#f01818"/><rect x="40.2" y="94.8" width="6.2" height="6.2" fill="#f01818"/><rect x="40.2" y="107.2" width="6.2" height="6.2" fill="#f01818"/><rect x="40.2" y="119.6" width="6.2" height="6.2" fill="#f01818"/><rect x="46.4" y="76.2" width="6.2" height="6.2" fill="#f01818"/><rect x="46.4" y="88.6" width="6.2" height="6.2" fill="#f01818"/><rect x="46.4" y="101.0" width="6.2" height="6.2" fill="#f01818"/><rect x="46.4" y="113.4" width="6.2" height="6.2" fill="#f01818"/><rect x="3.0" y="76.2" width="6.2" height="6.2" fill="#f4f4f4"/><rect x="3.0" y="88.6" width="6.2" height="6.2" fill="#f4f4f4"/><rect x="3.0" y="101.0" width="6.2" height="6.2" fill="#f4f4f4"/><rect x="3.0" y="113.4" width="6.2" height="6.2" fill="#f4f4f4"/><rect x="9.2" y="70.0" width="6.2" height="6.2" fill="#f4f4f4"/><rect x="9.2" y="82.4" width="6.2" height="6.2" fill="#f4f4f4"/><rect x="9.2" y="94.8" width="6.2" height="6.2" fill="#f4f4f4"/><rect x="9.2" y="107.2" width="6.2" height="6.2" fill="#f4f4f4"/><rect x="9.2" y="119.6" width="6.2" height="6.2" fill="#f4f4f4"/><rect x="15.4" y="76.2" width="6.2" height="6.2" fill="#f4f4f4"/><rect x="15.4" y="88.6" width="6.2" height="6.2" fill="#f4f4f4"/><rect x="15.4" y="101.0" width="6.2" height="6.2" fill="#f4f4f4"/><rect x="15.4" y="113.4" width="6.2" height="6.2" fill="#f4f4f4"/><rect x="21.6" y="70.0" width="6.2" height="6.2" fill="#f4f4f4"/><rect x="21.6" y="82.4" width="6.2" height="6.2" fill="#f4f4f4"/><rect x="21.6" y="94.8" width="6.2" height="6.2" fill="#f4f4f4"/><rect x="21.6" y="107.2" width="6.2" height="6.2" fill="#f4f4f4"/><rect x="21.6" y="119.6" width="6.2" height="6.2" fill="#f4f4f4"/><rect x="27.8" y="76.2" width="6.2" height="6.2" fill="#f4f4f4"/><rect x="27.8" y="88.6" width="6.2" height="6.2" fill="#f4f4f4"/><rect x="27.8" y="101.0" width="6.2" height="6.2" fill="#f4f4f4"/><rect x="27.8" y="113.4" width="6.2" height="6.2" fill="#f4f4f4"/><rect x="34.0" y="70.0" width="6.2" height="6.2" fill="#f4f4f4"/><rect x="34.0" y="82.4" width="6.2" height="6.2" fill="#f4f4f4"/><rect x="34.0" y="94.8" width="6.2" height="6.2" fill="#f4f4f4"/><rect x="34.0" y="107.2" width="6.2" height="6.2" fill="#f4f4f4"/><rect x="34.0" y="119.6" width="6.2" height="6.2" fill="#f4f4f4"/><rect x="40.2" y="76.2" width="6.2" height="6.2" fill="#f4f4f4"/><rect x="40.2" y="88.6" width="6.2" height="6.2" fill="#f4f4f4"/><rect x="40.2" y="101.0" width="6.2" height="6.2" fill="#f4f4f4"/><rect x="40.2" y="113.4" width="6.2" height="6.2" fill="#f4f4f4"/><rect x="46.4" y="70.0" width="6.2" height="6.2" fill="#f4f4f4"/><rect x="46.4" y="82.4" width="6.2" height="6.2" fill="#f4f4f4"/><rect x="46.4" y="94.8" width="6.2" height="6.2" fill="#f4f4f4"/><rect x="46.4" y="107.2" width="6.2" height="6.2" fill="#f4f4f4"/><rect x="46.4" y="119.6" width="6.2" height="6.2" fill="#f4f4f4"/></g><path d="M10 106 L16 116 L22 108 M34 106 L40 116 L46 108" fill="none" stroke="#c8a828" stroke-width="2.2"/><path d="M22 72 Q28 68 30 74" fill="none" stroke="#c8a828" stroke-width="2"/><path d="M58.3 66.8 H116 V118 Q116 136 88 138 Q66 138 58.3 142 Z" fill="#bca53a"/><path d="M66 74 Q74 66 86 72 L90 80 Q100 70 112 76 L108 96 Q114 104 110 116 L100 112 L96 128 L88 124 L86 134 L80 126 L70 130 L72 116 L62 114 Q60 104 68 98 Q60 88 66 74 Z" fill="#141414"/><path d="M70 98 Q86 108 104 94" fill="none" stroke="#b8b8b8" stroke-width="2.2"/><path d="M68 112 L76 118 L72 124 M100 110 L94 118 L102 122" fill="none" stroke="#f02020" stroke-width="2.4"/><path d="M74 72 L80 78" stroke="#f02020" stroke-width="2"/><path d="M29.6 32.1 H86.2 V90 Q86.2 98 78 98 H37.6 Q29.6 98 29.6 90 Z" fill="#f81c1c"/><path d="M40 40 L46 46 Q52 40 58 44 L62 41 L60 50 Q64 54 62 60 L56 62 Q62 70 68 72 L76 84 L80 90 L72 90 L66 80 L58 76 L50 84 L54 90 L44 90 L42 82 L46 76 Q40 68 42 60 L36 58 L40 52 L36 48 Z" fill="#dcdcdc"/><path d="M68 38 L72 48 L76 38 L80 46 L72 62 L66 50 Z" fill="none" stroke="#dcdcdc" stroke-width="2.2"/><circle cx="60" cy="39" r="2" fill="#e8c020"/></svg>
<div id="t72" class="t" style="left:584.00px;top:444.00px;font-size:39.5px;font-weight:700;color:#6aa78e;font-family:'Liberation Sans',sans-serif;transform:scaleX(1.0385);text-shadow:1.5px 2px 1.5px rgba(60,60,50,.45);">Магістерська програма</div>
<div id="t73" class="t" style="left:584.00px;top:490.00px;font-size:39.5px;font-weight:700;color:#6aa78e;font-family:'Liberation Sans',sans-serif;transform:scaleX(0.9683);text-shadow:1.5px 2px 1.5px rgba(60,60,50,.45);">«Розвиток туристичних</div>
<div id="t74" class="t" style="left:584.00px;top:535.00px;font-size:39.5px;font-weight:700;color:#6aa78e;font-family:'Liberation Sans',sans-serif;transform:scaleX(0.9694);text-shadow:1.5px 2px 1.5px rgba(60,60,50,.45);">дестинацій» як відповідь на</div>
<div id="t75" class="t" style="left:584.00px;top:581.00px;font-size:39.5px;font-weight:700;color:#6aa78e;font-family:'Liberation Sans',sans-serif;transform:scaleX(1.0065);text-shadow:1.5px 2px 1.5px rgba(60,60,50,.45);">кадровий дефіцит в ОМС</div>
<svg style="position:absolute;left:583px;top:571px;opacity:.7" width="228" height="3" viewBox="0 0 228 3"><path d="M0 1.5 L1.5 0.5 L3.0 2.5 L4.5 0.5 L6.0 2.5 L7.5 0.5 L9.0 2.5 L10.5 0.5 L12.0 2.5 L13.5 0.5 L15.0 2.5 L16.5 0.5 L18.0 2.5 L19.5 0.5 L21.0 2.5 L22.5 0.5 L24.0 2.5 L25.5 0.5 L27.0 2.5 L28.5 0.5 L30.0 2.5 L31.5 0.5 L33.0 2.5 L34.5 0.5 L36.0 2.5 L37.5 0.5 L39.0 2.5 L40.5 0.5 L42.0 2.5 L43.5 0.5 L45.0 2.5 L46.5 0.5 L48.0 2.5 L49.5 0.5 L51.0 2.5 L52.5 0.5 L54.0 2.5 L55.5 0.5 L57.0 2.5 L58.5 0.5 L60.0 2.5 L61.5 0.5 L63.0 2.5 L64.5 0.5 L66.0 2.5 L67.5 0.5 L69.0 2.5 L70.5 0.5 L72.0 2.5 L73.5 0.5 L75.0 2.5 L76.5 0.5 L78.0 2.5 L79.5 0.5 L81.0 2.5 L82.5 0.5 L84.0 2.5 L85.5 0.5 L87.0 2.5 L88.5 0.5 L90.0 2.5 L91.5 0.5 L93.0 2.5 L94.5 0.5 L96.0 2.5 L97.5 0.5 L99.0 2.5 L100.5 0.5 L102.0 2.5 L103.5 0.5 L105.0 2.5 L106.5 0.5 L108.0 2.5 L109.5 0.5 L111.0 2.5 L112.5 0.5 L114.0 2.5 L115.5 0.5 L117.0 2.5 L118.5 0.5 L120.0 2.5 L121.5 0.5 L123.0 2.5 L124.5 0.5 L126.0 2.5 L127.5 0.5 L129.0 2.5 L130.5 0.5 L132.0 2.5 L133.5 0.5 L135.0 2.5 L136.5 0.5 L138.0 2.5 L139.5 0.5 L141.0 2.5 L142.5 0.5 L144.0 2.5 L145.5 0.5 L147.0 2.5 L148.5 0.5 L150.0 2.5 L151.5 0.5 L153.0 2.5 L154.5 0.5 L156.0 2.5 L157.5 0.5 L159.0 2.5 L160.5 0.5 L162.0 2.5 L163.5 0.5 L165.0 2.5 L166.5 0.5 L168.0 2.5 L169.5 0.5 L171.0 2.5 L172.5 0.5 L174.0 2.5 L175.5 0.5 L177.0 2.5 L178.5 0.5 L180.0 2.5 L181.5 0.5 L183.0 2.5 L184.5 0.5 L186.0 2.5 L187.5 0.5 L189.0 2.5 L190.5 0.5 L192.0 2.5 L193.5 0.5 L195.0 2.5 L196.5 0.5 L198.0 2.5 L199.5 0.5 L201.0 2.5 L202.5 0.5 L204.0 2.5 L205.5 0.5 L207.0 2.5 L208.5 0.5 L210.0 2.5 L211.5 0.5 L213.0 2.5 L214.5 0.5 L216.0 2.5 L217.5 0.5 L219.0 2.5 L220.5 0.5 L222.0 2.5 L223.5 0.5 L225.0 2.5 L226.5 0.5 L228.0 2.5" fill="none" stroke="#e03030" stroke-width=".7"/></svg>
<div id="t76" class="t" style="left:1134.00px;top:665.00px;font-size:19.5px;font-weight:700;color:#505050;font-family:'Liberation Sans',sans-serif;transform:scaleX(1.0321);">Галина Щука,</div>
<div id="t77" class="t" style="left:1001.70px;top:693.00px;font-size:19.5px;font-weight:700;color:#505050;font-family:'Liberation Sans',sans-serif;transform:scaleX(1.0618);">доктор педагогічних наук,</div>
<div id="t78" class="t" style="left:1161.00px;top:720.00px;font-size:19.5px;font-weight:700;color:#505050;font-family:'Liberation Sans',sans-serif;transform:scaleX(1.1057);">професор</div>
<svg style="position:absolute;left:955px;top:315px;" width="112" height="100" viewBox="0 0 112 100"><g fill="none" stroke="#1c3466" stroke-width="2.2" stroke-linejoin="round"><path d="M28 18.7 L33.8 11.7 L56 9.1 L79.3 11.7 L84.6 18.7"/><path d="M30.9 20.4 L35 16.3 L56 14.6 L77 16.3 L81.7 21.6"/><path d="M29.8 22 Q24 31 12 35 V42.5"/><path d="M82.8 22 Q88 31 100.9 35 V42.5"/><path d="M8.2 45 Q22 45 36 49"/><path d="M103.8 45 Q90 45 76 49"/><path d="M8.4 45.5 Q8 72 31.5 91" stroke-width="2.4"/><path d="M103.6 45.5 Q104 72 80.5 91" stroke-width="2.4"/></g><g fill="none" stroke="#1c3466" stroke-width="1.7"><path d="M56 21 Q36 36 36.2 56 Q36 78 50.2 96.8"/><path d="M56 21 Q76 36 75.8 56 Q76 78 61.3 96.8"/><path d="M36 49 Q50 60 56 80.5"/><path d="M76 49 Q62 60 56 80.5"/><path d="M49 60 Q56 49 63 60"/><path d="M54 84 L56 74 L58 84"/></g></svg>
<div style="position:absolute;left:1082.2px;top:332px;width:3.5px;height:69px;background:#f5bf14"></div>
<div id="t79" class="t" style="left:1103.10px;top:335.00px;font-size:17px;font-weight:700;color:#1c3160;font-family:'Liberation Sans',sans-serif;transform:scaleX(0.9109);">Закарпатський</div>
<div id="t80" class="t" style="left:1103.10px;top:357.00px;font-size:17px;font-weight:700;color:#1c3160;font-family:'Liberation Sans',sans-serif;transform:scaleX(0.8985);">угорський університет</div>
<div id="t81" class="t" style="left:1103.10px;top:379.00px;font-size:17px;font-weight:700;color:#1c3160;font-family:'Liberation Sans',sans-serif;transform:scaleX(0.9187);">імені Ференца Ракоці ІІ</div>
</div></div>
<div style="position:absolute;left:22.7px;top:725px;width:40px;height:40px;border-radius:50%;background:#2a2b2e"></div>
<svg style="position:absolute;left:33px;top:734px;" width="20" height="20" viewBox="0 0 20 20"><path d="M3.2 16.5 V13 L13.5 2.8 Q14.5 1.8 15.5 2.8 L17.2 4.5 Q18.2 5.5 17.2 6.5 L7 16.7 H3.2 Z" fill="none" stroke="#1de88e" stroke-width="1.6" stroke-linejoin="round"/><path d="M11.5 5 L15 8.5" stroke="#1de88e" stroke-width="1.4"/><path d="M3.2 19.4 H17.5" stroke="#1de88e" stroke-width="1.6"/></svg>
<div style="position:absolute;left:0px;top:767px;width:1600px;height:73px;background:#000"></div>
<svg style="position:absolute;left:50px;top:779px;" width="32" height="32" viewBox="0 0 32 32"><rect x="9.8" y="1.5" width="9.5" height="18.5" rx="4.75" fill="none" stroke="#fff" stroke-width="1.7"/><path d="M5.5 15 Q5.5 24.5 14.5 24.5 Q23.8 24.5 23.8 15" fill="none" stroke="#fff" stroke-width="1.7"/><path d="M14.5 24.5 V30 M9.5 30.2 H19.5" stroke="#fff" stroke-width="1.7"/><path d="M2 30.2 L28.5 2.2" stroke="#000" stroke-width="4.5"/><path d="M1.6 30.2 L28.8 2" stroke="#f0205a" stroke-width="2.4" stroke-linecap="round"/></svg>
<svg style="position:absolute;left:100.5px;top:792px;" width="10" height="6" viewBox="0 0 10 6"><polyline points="1,5.2 5,1.2 9,5.2" fill="none" stroke="#fff" stroke-width="1.6"/></svg>
<div id="t82" class="t" style="left:50.00px;top:818.00px;font-size:13.5px;font-weight:700;color:#ffffff;font-family:'Liberation Sans',sans-serif;transform:scaleX(1.0102);">Звук</div>
<svg style="position:absolute;left:165px;top:779px;" width="32" height="32" viewBox="0 0 32 32"><rect x="1.7" y="7.5" width="19.8" height="17" rx="3" fill="none" stroke="#fff" stroke-width="1.7"/><path d="M21.5 13 L30 7.5 V24.5 L21.5 19" fill="none" stroke="#fff" stroke-width="1.7" stroke-linejoin="round"/><path d="M2.5 30.2 L29 2.2" stroke="#000" stroke-width="4.5"/><path d="M2 30.2 L29.5 2" stroke="#f0205a" stroke-width="2.4" stroke-linecap="round"/></svg>
<svg style="position:absolute;left:223px;top:792px;" width="10" height="6" viewBox="0 0 10 6"><polyline points="1,5.2 5,1.2 9,5.2" fill="none" stroke="#fff" stroke-width="1.6"/></svg>
<div id="t83" class="t" style="left:160.00px;top:818.00px;font-size:13.5px;font-weight:700;color:#ffffff;font-family:'Liberation Sans',sans-serif;transform:scaleX(1.0053);">Видео</div>
<svg style="position:absolute;left:488px;top:784px;" width="26" height="23" viewBox="0 0 26 23"><circle cx="8" cy="5" r="3.9" fill="none" stroke="#fff" stroke-width="1.6"/><path d="M1 21.5 V16 Q1 11.5 6 11.5 H10 Q12.5 11.5 13.5 13" fill="none" stroke="#fff" stroke-width="1.6"/><circle cx="17" cy="9.5" r="3.7" fill="none" stroke="#fff" stroke-width="1.6"/><rect x="10.5" y="15.5" width="13.5" height="6.5" rx="3.2" fill="none" stroke="#fff" stroke-width="1.6"/></svg>
<div id="t84" class="t" style="left:521.30px;top:788.00px;font-size:14px;font-weight:700;color:#a8a8a8;font-family:'Liberation Sans',sans-serif;transform:scaleX(1.0913);">46</div>
<svg style="position:absolute;left:563px;top:792px;" width="10" height="6" viewBox="0 0 10 6"><polyline points="1,5.2 5,1.2 9,5.2" fill="none" stroke="#fff" stroke-width="1.6"/></svg>
<div id="t85" class="t" style="left:464.70px;top:818.00px;font-size:13.5px;font-weight:700;color:#ffffff;font-family:'Liberation Sans',sans-serif;transform:scaleX(1.0479);">Участники</div>
<svg style="position:absolute;left:623px;top:780px;" width="30" height="30" viewBox="0 0 30 30"><path d="M9 6.5 Q9 1 14.5 1 H22 Q28.5 1 28.5 7.5 V13 Q28.5 17.5 25 19" fill="none" stroke="#fff" stroke-width="1.6"/><path d="M2 15.5 Q2 8 9.5 8 H15.5 Q23 8 23 15.5 Q23 23 15.5 23 H10 L5 27.5 V22.5 Q2 20.5 2 15.5 Z" fill="none" stroke="#fff" stroke-width="1.6" stroke-linejoin="round"/><circle cx="8.5" cy="15.5" r="1.4" fill="#fff"/><circle cx="12.5" cy="15.5" r="1.4" fill="#fff"/><circle cx="16.5" cy="15.5" r="1.4" fill="#fff"/></svg>
<svg style="position:absolute;left:675.5px;top:792px;" width="10" height="6" viewBox="0 0 10 6"><polyline points="1,5.2 5,1.2 9,5.2" fill="none" stroke="#fff" stroke-width="1.6"/></svg>
<div id="t86" class="t" style="left:627.00px;top:818.00px;font-size:13.5px;font-weight:700;color:#ffffff;font-family:'Liberation Sans',sans-serif;transform:scaleX(1.0038);">Чат</div>
<svg style="position:absolute;left:742px;top:782px;" width="32" height="27" viewBox="0 0 32 27"><path d="M16 25.5 Q8 20 3.5 14.5 Q0 10 1.8 5.5 Q4 1 9 1.2 Q13.5 1.5 16 5.5 Q18.5 1.5 23 1.2 Q28 1 30.2 5.5 Q32 10 28.5 14.5 Q24 20 16 25.5 Z" fill="none" stroke="#fff" stroke-width="1.7" stroke-linejoin="round"/></svg>
<svg style="position:absolute;left:803px;top:792px;" width="10" height="6" viewBox="0 0 10 6"><polyline points="1,5.2 5,1.2 9,5.2" fill="none" stroke="#fff" stroke-width="1.6"/></svg>
<div id="t87" class="t" style="left:705.30px;top:818.00px;font-size:13.5px;font-weight:700;color:#ffffff;font-family:'Liberation Sans',sans-serif;transform:scaleX(1.0558);">Отреагировать</div>
<div style="position:absolute;left:868px;top:782.6px;width:31px;height:25px;background:#17e37e;border-radius:4px"></div>
<svg style="position:absolute;left:876px;top:787px;" width="15" height="15" viewBox="0 0 15 15"><path d="M7.5 13.5 V3 M2.5 7.5 L7.5 2.5 L12.5 7.5" fill="none" stroke="#000" stroke-width="2.3" stroke-linejoin="miter"/></svg>
<div id="t88" class="t" style="left:842.00px;top:818.00px;font-size:13.5px;font-weight:700;color:#ffffff;font-family:'Liberation Sans',sans-serif;transform:scaleX(1.0292);">Поделиться</div>
<svg style="position:absolute;left:1044px;top:779px;" width="33" height="33" viewBox="0 0 33 33"><circle cx="16.4" cy="16.5" r="14.4" fill="none" stroke="#fff" stroke-width="1.8"/><circle cx="16.4" cy="9.5" r="1.8" fill="#fff"/><path d="M13 13.5 H17.5 V22.5 M12.5 23 H20.5" fill="none" stroke="#fff" stroke-width="2"/></svg>
<div id="t89" class="t" style="left:956.00px;top:818.00px;font-size:13.5px;font-weight:700;color:#ffffff;font-family:'Liberation Sans',sans-serif;transform:scaleX(1.0809);">Информация о конференции</div>
<svg style="position:absolute;left:1228px;top:779px;" width="33" height="33" viewBox="0 0 33 33"><circle cx="16.4" cy="16.5" r="14.4" fill="none" stroke="#fff" stroke-width="1.8"/><circle cx="10.4" cy="16.5" r="1.9" fill="#fff"/><circle cx="16.4" cy="16.5" r="1.9" fill="#fff"/><circle cx="22.4" cy="16.5" r="1.9" fill="#fff"/></svg>
<div id="t90" class="t" style="left:1187.00px;top:818.00px;font-size:13.5px;font-weight:700;color:#ffffff;font-family:'Liberation Sans',sans-serif;transform:scaleX(1.0701);">Дополнительно</div>
<svg style="position:absolute;left:1524px;top:779px;" width="34" height="33" viewBox="0 0 34 33"><path d="M21.6 30.3 V7 L31 2 V25 Z" fill="none" stroke="#f0205a" stroke-width="1.9" stroke-linejoin="round"/><path d="M12.5 1.5 H31" stroke="#f0205a" stroke-width="1.9"/><circle cx="11.9" cy="7.5" r="3.6" fill="#000" stroke="#fff" stroke-width="1.7"/><path d="M9.5 12.5 Q5.5 12.5 3.5 16.5 Q3 18 4.5 18.5 Q6 18.5 7 16.5 L7.5 20.5 L3.5 27 Q2.5 29 4.5 30 Q6 30.5 7 29 L10.5 23.5 L12.5 29.5 Q13.5 31 15 30.5 Q16.5 29.5 16 28 L14 20 L14.5 16 L16 18 Q17 19 18 18 Q18.5 17 18 16 L15.5 13.5 Q14 12.5 12.5 12.5 Z" fill="none" stroke="#fff" stroke-width="1.6" stroke-linejoin="round"/></svg>
<div id="t91" class="t" style="left:1517.20px;top:818.00px;font-size:13.5px;font-weight:700;color:#ffffff;font-family:'Liberation Sans',sans-serif;transform:scaleX(1.0067);">Выйти</div>
<div style="position:absolute;left:0px;top:840px;width:1600px;height:60px;background:linear-gradient(90deg,#e4e0ed 0,#e6e2ee 22%,#e1e4f0 50%,#dee5f0 70%,#dbe3ef 100%)"></div>
<div style="position:absolute;left:0px;top:840px;width:1600px;height:1.5px;background:#c6c5cc"></div>
<svg style="position:absolute;left:25.7px;top:856.2px;" width="29" height="29" viewBox="0 0 29 29"><rect x="0" y="0" width="13.8" height="13.8" rx="1.5" fill="#40c0f4"/><rect x="15.2" y="0" width="13.8" height="13.8" rx="1.5" fill="#1aa0ea"/><rect x="0" y="15.2" width="13.8" height="13.8" rx="1.5" fill="#1aa0ea"/><rect x="15.2" y="15.2" width="13.8" height="13.8" rx="1.5" fill="#0a84d8"/></svg>
<div style="position:absolute;left:74.8px;top:851.8px;width:122px;height:37px;background:#f8f8fb;border-radius:19px;box-shadow:0 0.5px 1px rgba(0,0,0,.12)"></div>
<svg style="position:absolute;left:100.5px;top:863px;" width="17" height="16" viewBox="0 0 17 16"><circle cx="7" cy="6.5" r="5.5" fill="none" stroke="#1a1a1a" stroke-width="1.7"/><path d="M11 10.5 L16 15.5" stroke="#1a1a1a" stroke-width="1.8"/></svg>
<div id="t92" class="t" style="left:124.70px;top:863.00px;font-size:15px;font-weight:400;color:#1a1a1a;font-family:'Liberation Sans',sans-serif;transform:scaleX(1.0169);">Пошук</div>
<svg style="position:absolute;left:214px;top:855.7px;" width="30" height="28" viewBox="0 0 30 28"><defs><linearGradient id="cpa" x1="0" y1="0" x2="0" y2="1"><stop offset="0" stop-color="#18a0f8"/><stop offset=".5" stop-color="#50b858"/><stop offset="1" stop-color="#f8d808"/></linearGradient><linearGradient id="cpb" x1="0" y1="0" x2="0" y2="1"><stop offset="0" stop-color="#a850e8"/><stop offset=".5" stop-color="#f05890"/><stop offset="1" stop-color="#f8a840"/></linearGradient></defs><path d="M7 1 H17 Q21 1 22 5 L23 9 H18 Q14 9 13 13 L12 17 Q11 20.5 7 20.5 H3 Q-0.5 20.5 0.5 16 L3 6 Q4.5 1 7 1 Z" fill="url(#cpa)"/><path d="M17 1 Q21 1 22 5 L23 9 H17 Z" fill="#1a50d8"/><path d="M23 27 H13 Q9 27 8 23 L7 19.5 H11 Q14 19.5 15 15 L16 11 Q17 7.5 21 7.5 H25 Q29.5 7.5 29 12 L26.5 22 Q25 27 23 27 Z" fill="url(#cpb)"/><path d="M13 27 Q9 27 8 23 L7 19.5 H12 L14 27 Z" fill="#e84a30"/></svg>
<svg style="position:absolute;left:269px;top:858px;" width="30" height="23" viewBox="0 0 30 23"><rect x="0.5" y="0.5" width="29" height="22" rx="2" fill="#38b0f0"/><rect x="2.5" y="2.5" width="25" height="18" fill="#bfe4f8"/><circle cx="10" cy="9.5" r="5.8" fill="#2a90e0"/><path d="M10 9.5 V3.7 A5.8 5.8 0 0 1 15.8 9.5 Z" fill="#f29010"/><path d="M16 6 Q18 4 20 5" fill="none" stroke="#2a78c8" stroke-width=".6"/><rect x="21" y="4" width="4" height="2.5" rx="1.2" fill="#2a70d0"/><rect x="21" y="8" width="4" height="2.5" rx="1.2" fill="#2a70d0"/><rect x="21" y="12" width="4" height="2.5" rx="1.2" fill="#2a70d0"/><rect x="4" y="16.5" width="9" height="1.3" fill="#f09020"/><rect x="15" y="16.5" width="11" height="1.3" fill="#2a80d8"/></svg>
<svg style="position:absolute;left:324px;top:855px;" width="30" height="30" viewBox="0 0 30 30"><path d="M15 15 L2.44 7.75 A14.5 14.5 0 0 1 27.56 7.75 Z" fill="#e8453c"/><path d="M15 15 L27.56 7.75 A14.5 14.5 0 0 1 15 29.5 Z" fill="#f9bc15"/><path d="M15 15 L15 29.5 A14.5 14.5 0 0 1 2.44 7.75 Z" fill="#34a853"/><circle cx="15" cy="15" r="6.8" fill="#fff"/><circle cx="15" cy="15" r="5.3" fill="#4a80e8"/></svg>
<svg style="position:absolute;left:378.7px;top:857.8px;" width="31" height="25" viewBox="0 0 31 25"><path d="M2 5 H9 L11 2 H20 L22 5 H29 Q30.5 5 30.5 7 V23 Q30.5 24.5 29 24.5 H2 Q0.5 24.5 0.5 23 V7 Q0.5 5 2 5 Z" fill="#5a5e68"/><rect x="3" y="2" width="5" height="3" rx="1" fill="#2a88d8"/><circle cx="15.5" cy="14.5" r="7.5" fill="#e0e0e8"/><circle cx="15.5" cy="14.5" r="5.8" fill="#9a7af0"/><circle cx="15.5" cy="14.5" r="3.5" fill="#6aa8f8" opacity=".6"/><path d="M26 8 V11 M24.5 9.5 H27.5" stroke="#fff" stroke-width=".8"/></svg>
<svg style="position:absolute;left:433.8px;top:856.5px;" width="31" height="27" viewBox="0 0 31 27"><path d="M1 3 Q1 1 3 1 H11 L14 4 H28 Q30 4 30 6 V25 Q30 27 28 27 H3 Q1 27 1 25 Z" fill="#f0b820"/><rect x="1" y="8" width="29" height="19" rx="1.5" fill="#fcd34a"/><rect x="7.5" y="17" width="16" height="10" rx="1.5" fill="#1a78d0"/><rect x="10" y="20" width="11" height="1.5" fill="#fff" opacity=".0"/></svg>
<div style="position:absolute;left:446px;top:890.3px;width:7px;height:3px;background:#707078;border-radius:2px"></div>
<div style="position:absolute;left:481px;top:846.9px;width:46.3px;height:46.7px;background:#f4f5f9;border-radius:5px"></div>
<div style="position:absolute;left:488.8px;top:854.3px;width:30.8px;height:30.5px;border-radius:50%;background:#0b5cff"></div>
<div id="t93" class="t" style="left:496.70px;top:867.00px;font-size:7.5px;font-weight:700;color:#ffffff;font-family:'Liberation Sans',sans-serif;transform:scaleX(0.7656);">zoom</div>
<div style="position:absolute;left:494.3px;top:890px;width:19.7px;height:3.6px;background:#1a6ef0;border-radius:2px"></div>
<svg style="position:absolute;left:544.3px;top:855.7px;" width="28" height="27" viewBox="0 0 28 27"><rect x="1" y="0.5" width="26" height="24" fill="#f8f0e8" stroke="#d86a40" stroke-width="1"/><rect x="1" y="0.5" width="26" height="24" fill="url(#ppg)" opacity=".0"/><text x="4" y="18" font-size="17" font-weight="700" fill="#d04a1a" font-family="Liberation Sans">P</text><path d="M14 16 L27 13 V26 H14 Z" fill="#fff" stroke="#b0b0b0" stroke-width=".6"/><circle cx="19" cy="18" r="2.5" fill="#e06a40"/><path d="M16 22 H25" stroke="#e06a40" stroke-width="1"/></svg>
<div style="position:absolute;left:556px;top:890.3px;width:7px;height:3px;background:#707078;border-radius:2px"></div>
<svg style="position:absolute;left:599.3px;top:855.7px;" width="28" height="27" viewBox="0 0 28 27"><rect x="1" y="0.5" width="26" height="24" fill="#eef3fb" stroke="#4a78c0" stroke-width="1"/><text x="2.5" y="18" font-size="17" font-weight="700" fill="#1a4aa0" font-family="Liberation Sans">W</text><path d="M15 17 L27 14 V26 H15 Z" fill="#fff" stroke="#b0b0b0" stroke-width=".6"/><path d="M17 20 H25 M17 22.5 H25" stroke="#8aa8d8" stroke-width=".8"/></svg>
<div style="position:absolute;left:611px;top:890.3px;width:7px;height:3px;background:#707078;border-radius:2px"></div>
<svg style="position:absolute;left:655.7px;top:856.5px;" width="27" height="27" viewBox="0 0 27 27"><circle cx="13.5" cy="13.5" r="13.3" fill="#2a9ee0"/><path d="M5.5 13 L20 7.5 L17.5 20 L13 16.5 L11 18.5 L11.2 15 L17.5 9.5 L9.8 14.5 Z" fill="#fff"/></svg>
<svg style="position:absolute;left:710.7px;top:856px;" width="27" height="29" viewBox="0 0 27 29"><path d="M13.5 1 Q26 1 26 12 Q26 23 13.5 23 L12 23 L8 28 V22 Q1 19.5 1 12 Q1 1 13.5 1 Z" fill="#7b51c8" stroke="#fff" stroke-width="1.5"/><path d="M9 7 Q8 9 10 13 Q13 17 16.5 17.5 Q18 17 18.2 15.5 L16 14 L15 15 Q12.5 14 11 11 L12 10 L10.8 7.5 Q10 6.5 9 7 Z" fill="#fff"/><path d="M14 6 Q19 6.5 19.5 11.5 M14 8.5 Q16.8 8.8 17 11.5" fill="none" stroke="#fff" stroke-width=".9"/></svg>
<div style="position:absolute;left:721px;top:890.3px;width:7px;height:3px;background:#707078;border-radius:2px"></div>
<svg style="position:absolute;left:764.6px;top:855px;" width="29" height="30" viewBox="0 0 29 30"><path d="M8 1 L22 1 L28.5 14 L22 29 L8 29 L0.5 15 Z" fill="#22a83a"/><text x="6.5" y="21" font-size="15" font-weight="700" fill="#fff" font-family="Liberation Sans">rt</text></svg>
<svg style="position:absolute;left:819.3px;top:855.5px;" width="30" height="30" viewBox="0 0 30 30"><path d="M15 15 L2.44 7.75 A14.5 14.5 0 0 1 27.56 7.75 Z" fill="#e8453c"/><path d="M15 15 L27.56 7.75 A14.5 14.5 0 0 1 15 29.5 Z" fill="#f9bc15"/><path d="M15 15 L15 29.5 A14.5 14.5 0 0 1 2.44 7.75 Z" fill="#34a853"/><circle cx="15" cy="15" r="6.8" fill="#fff"/><circle cx="15" cy="15" r="5.3" fill="#4a80e8"/></svg>
<div style="position:absolute;left:834.5px;top:848.2px;width:21px;height:21px;border-radius:50%;background:#7b57c8;border:0px solid #fff"></div>
<div id="t94" class="t" style="left:841.00px;top:855.00px;font-size:11px;font-weight:700;color:#ffffff;font-family:'Liberation Sans',sans-serif;transform:scaleX(1.0059);">C</div>
<div style="position:absolute;left:831px;top:890.3px;width:7px;height:3px;background:#707078;border-radius:2px"></div>
<svg style="position:absolute;left:1231.9px;top:866px;" width="13.5" height="8" viewBox="0 0 13.5 8"><polyline points="1,7 6.75,1.2 12.5,7" fill="none" stroke="#1a1a1a" stroke-width="1.5"/></svg>
<svg style="position:absolute;left:1267.5px;top:862px;" width="22" height="14" viewBox="0 0 22 14"><path d="M5 13.5 Q0.5 13.5 0.5 9.5 Q0.5 6 4 5.5 Q5.5 0.8 11 0.8 Q16 0.8 17 5 Q21.5 5.5 21.5 9.5 Q21.5 13.5 17 13.5 Z" fill="#d8d8dc" stroke="#3a3a3a" stroke-width="1.3"/><path d="M3 12 Q10 6 20 8" fill="none" stroke="#888" stroke-width="1" opacity=".6"/></svg>
<svg style="position:absolute;left:1311.4px;top:860.4px;" width="15" height="19" viewBox="0 0 15 19"><rect x="4" y="0.8" width="7" height="12" rx="3.5" fill="none" stroke="#1a5ac8" stroke-width="1.6"/><path d="M1 9 Q1 15 7.5 15 Q14 15 14 9 M7.5 15 V18.5" fill="none" stroke="#1a5ac8" stroke-width="1.6"/></svg>
<div id="t95" class="t" style="left:1353.00px;top:863.00px;font-size:15.5px;font-weight:400;color:#1a1a1a;font-family:'Liberation Sans',sans-serif;transform:scaleX(0.8556);">УКР</div>
<svg style="position:absolute;left:1402.9px;top:862.8px;" width="21" height="14" viewBox="0 0 21 14"><path d="M1 5 Q10.5 -3 20 5" fill="none" stroke="#1a1a1a" stroke-width="1.6"/><path d="M4 8 Q10.5 2.5 17 8" fill="none" stroke="#1a1a1a" stroke-width="1.6"/><path d="M7 11 Q10.5 8 14 11" fill="none" stroke="#1a1a1a" stroke-width="1.6"/><circle cx="10.5" cy="12.6" r="1.5" fill="#1a1a1a"/></svg>
<svg style="position:absolute;left:1432.6px;top:862.8px;" width="21" height="15" viewBox="0 0 21 15"><path d="M1 5 H4.5 L9.5 1 V14 L4.5 10 H1 Z" fill="none" stroke="#1a1a1a" stroke-width="1.4" stroke-linejoin="round"/><path d="M13 4.5 Q15 7.5 13 10.5" fill="none" stroke="#1a1a1a" stroke-width="1.3"/><path d="M15.5 2.5 Q19 7.5 15.5 12.5" fill="none" stroke="#999" stroke-width="1.2"/><path d="M18 1 Q22.5 7.5 18 14" fill="none" stroke="#bbb" stroke-width="1.1"/></svg>
<svg style="position:absolute;left:1462.8px;top:864.5px;" width="21" height="12" viewBox="0 0 21 12"><rect x="0.8" y="0.8" width="17" height="10.4" rx="2.5" fill="none" stroke="#1a1a1a" stroke-width="1.5"/><rect x="3" y="3" width="7.5" height="6" rx=".8" fill="#1a1a1a"/><rect x="18.5" y="4" width="2" height="4" rx=".8" fill="#1a1a1a"/></svg>
<div id="t96" class="t" style="left:1540.20px;top:852.00px;font-size:15.5px;font-weight:400;color:#1a1a1a;font-family:'Liberation Sans',sans-serif;transform:scaleX(0.9405);">11:22</div>
<div id="t97" class="t" style="left:1503.80px;top:872.00px;font-size:15.5px;font-weight:400;color:#1a1a1a;font-family:'Liberation Sans',sans-serif;transform:scaleX(0.9393);">27.11.2025</div>
</body></html>
